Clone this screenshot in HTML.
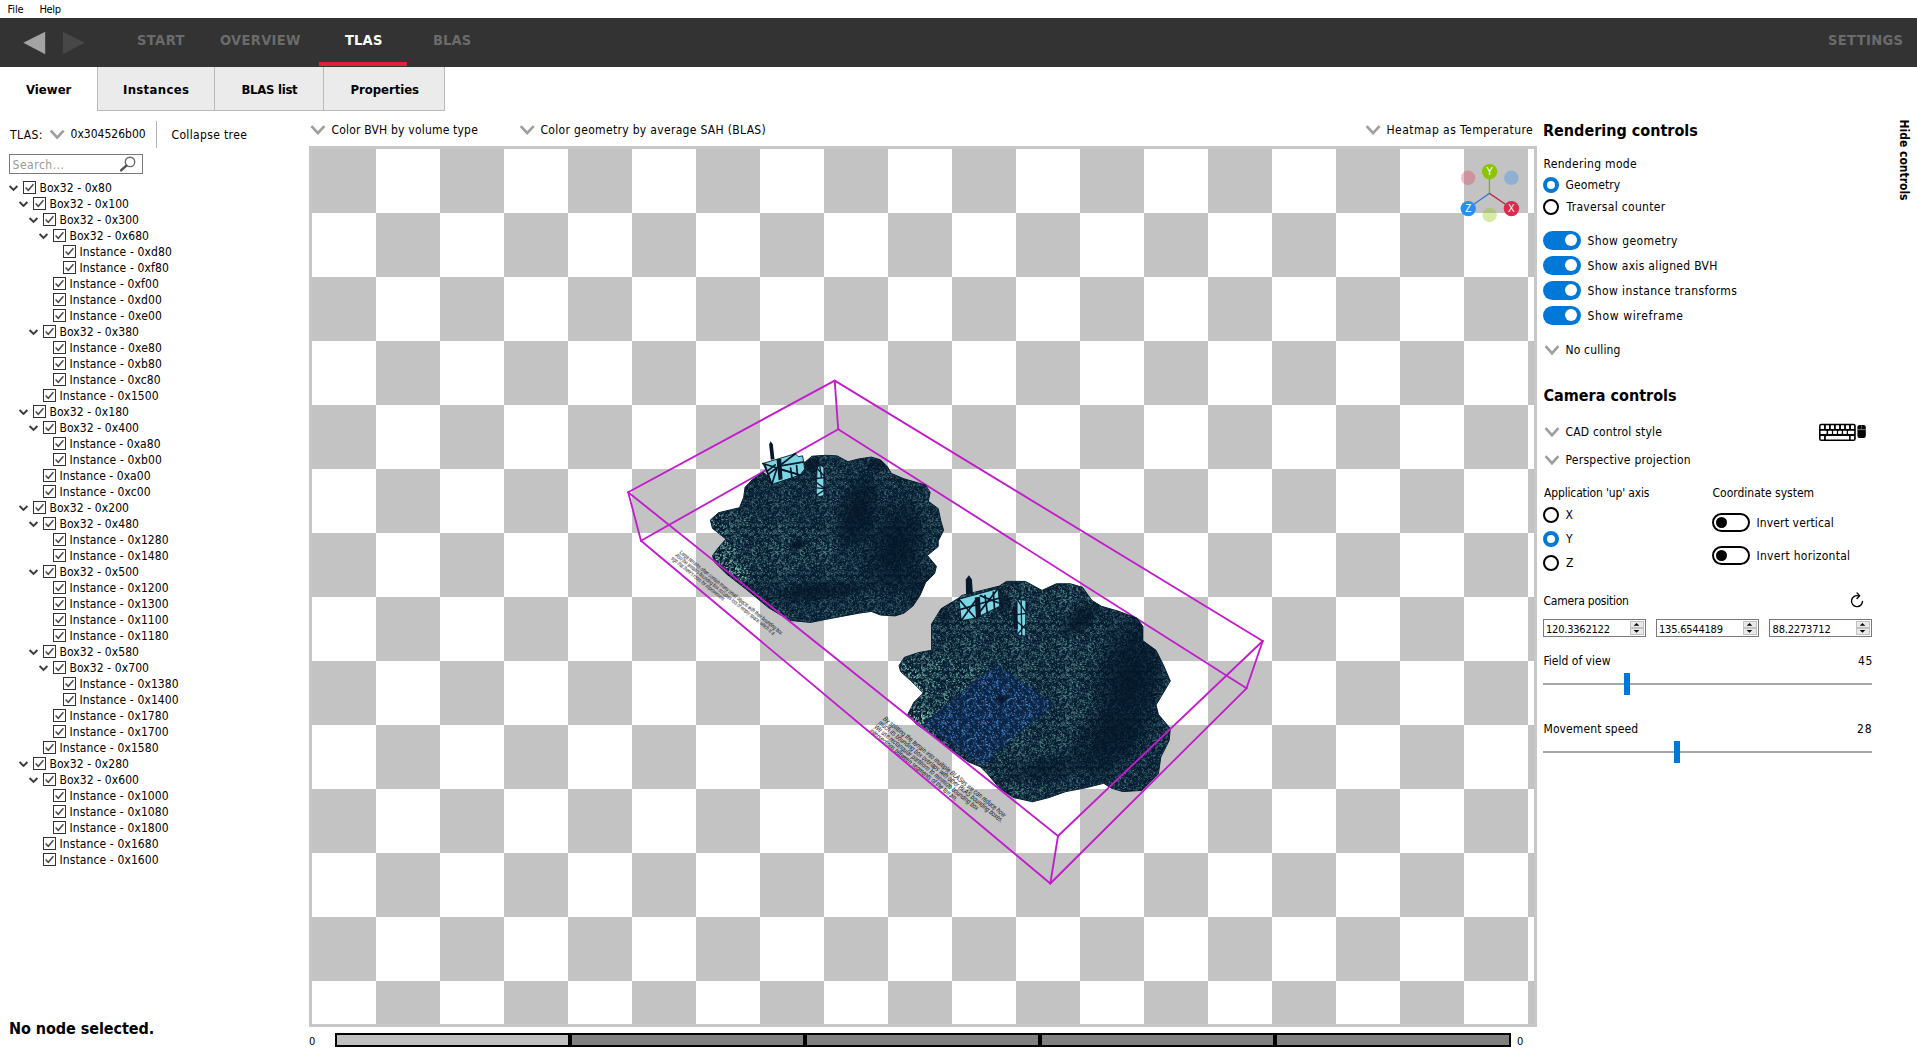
<!DOCTYPE html>
<html lang="en"><head><meta charset="utf-8"><title>Radeon Raytracing Analyzer</title>
<style>
html,body{margin:0;padding:0;background:#fff;}
body{width:1917px;height:1053px;position:relative;overflow:hidden;font-family:"DejaVu Sans Condensed","DejaVu Sans","Liberation Sans",sans-serif;font-stretch:condensed;font-size:12px;color:#000;}
.t{position:absolute;white-space:pre;line-height:20px;}
.b{position:absolute;box-sizing:border-box;}
svg{display:block;overflow:visible;}
</style></head><body>

<div class="t" id="t0" style="left:7.50px;top:0px;font-size:11px;letter-spacing:-0.133px;">File</div>
<div class="t" id="t1" style="left:39.50px;top:0px;font-size:11px;letter-spacing:-0.366px;">Help</div>
<div class="b" style="left:0px;top:18px;width:1917px;height:49px;background:#333333;"></div>
<svg class="b" style="left:0;top:18px" width="120" height="49"><polygon points="23.3,24.7 45.2,13.7 45.2,36.3" fill="#a3a3a3"/><polygon points="62.8,13.7 84.8,24.7 62.8,36.3" fill="#474747"/></svg>
<div class="t" id="t2" style="left:137.00px;top:30px;font-size:14.5px;font-weight:bold;color:#6b6b6b;letter-spacing:0.475px;">START</div>
<div class="t" id="t3" style="left:220.00px;top:30px;font-size:14.5px;font-weight:bold;color:#6b6b6b;letter-spacing:0.343px;">OVERVIEW</div>
<div class="t" id="t4" style="left:345.00px;top:30px;font-size:14.5px;font-weight:bold;color:#ffffff;letter-spacing:0.200px;">TLAS</div>
<div class="t" id="t5" style="left:433.00px;top:30px;font-size:14.5px;font-weight:bold;color:#6b6b6b;letter-spacing:0.167px;">BLAS</div>
<div class="t" id="t6" style="left:1828.00px;top:30px;font-size:14.5px;font-weight:bold;color:#6b6b6b;letter-spacing:0.371px;">SETTINGS</div>
<div class="b" style="left:319px;top:61.7px;width:88px;height:4.7px;background:#e0213c;"></div>
<div class="b" style="left:97px;top:67px;width:348px;height:44px;background:#ebebeb;border:1px solid #b9b9b9;border-top:none;"></div>
<div class="b" style="left:214px;top:67px;width:1px;height:43px;background:#b9b9b9;"></div>
<div class="b" style="left:323px;top:67px;width:1px;height:43px;background:#b9b9b9;"></div>
<div class="t" id="t7" style="left:26.00px;top:80px;font-size:13px;font-weight:bold;letter-spacing:0.020px;">Viewer</div>
<div class="t" id="t8" style="left:123.00px;top:80px;font-size:13px;font-weight:bold;letter-spacing:0.325px;">Instances</div>
<div class="t" id="t9" style="left:241.50px;top:80px;font-size:13px;font-weight:bold;letter-spacing:-0.288px;">BLAS list</div>
<div class="t" id="t10" style="left:350.50px;top:80px;font-size:13px;font-weight:bold;letter-spacing:-0.044px;">Properties</div>
<div class="t" id="t11" style="left:10.00px;top:125px;font-size:12px;letter-spacing:0.425px;">TLAS:</div>
<svg class="b" style="left:0;top:0" width="1" height="1"><path d="M50.75,130.55 L57.20,137.55 L63.65,130.55" fill="none" stroke="#9e9e9e" stroke-width="2.7" stroke-linejoin="miter"/></svg>
<div class="t" id="t12" style="left:70.50px;top:124px;font-size:12px;letter-spacing:0.010px;">0x304526b00</div>
<div class="b" style="left:156px;top:121px;width:1px;height:27px;background:#b4b4b4;"></div>
<div class="t" id="t13" style="left:171.50px;top:125px;font-size:12px;letter-spacing:0.358px;">Collapse tree</div>
<div class="b" style="left:9px;top:154px;width:134px;height:20px;background:#fff;border:1px solid #7a7a7a;"></div>
<div class="t" id="t14" style="left:12.50px;top:155px;font-size:12px;color:#999999;letter-spacing:0.524px;">Search...</div>
<svg class="b" style="left:119px;top:156px" width="18" height="16" viewBox="0 0 18 16"><circle cx="11" cy="5.9" r="4.7" fill="none" stroke="#666" stroke-width="1.4"/><path d="M7.4,9.6 L2.2,14.3" stroke="#555" stroke-width="2.5" stroke-linecap="round"/></svg>
<svg width="0" height="0" style="position:absolute"><defs><g id="cb"><rect x="0.5" y="0.5" width="12" height="12" fill="#fff" stroke="#333" stroke-width="1"/><path d="M2.6,6.4 L5.3,9.3 L10.4,3.2" fill="none" stroke="#4a4a4a" stroke-width="1.5"/></g><g id="ar"><path d="M0.6,0.8 L4.5,4.7 L8.4,0.8" fill="none" stroke="#3a3a3a" stroke-width="1.9"/></g></defs></svg>
<svg class="b" style="left:0;top:176px" width="300" height="700">
<use href="#cb" x="23" y="5"/>
<use href="#ar" x="9" y="9.2"/>
<use href="#cb" x="33" y="21"/>
<use href="#ar" x="19" y="25.2"/>
<use href="#cb" x="43" y="37"/>
<use href="#ar" x="29" y="41.2"/>
<use href="#cb" x="53" y="53"/>
<use href="#ar" x="39" y="57.2"/>
<use href="#cb" x="63" y="69"/>
<use href="#cb" x="63" y="85"/>
<use href="#cb" x="53" y="101"/>
<use href="#cb" x="53" y="117"/>
<use href="#cb" x="53" y="133"/>
<use href="#cb" x="43" y="149"/>
<use href="#ar" x="29" y="153.2"/>
<use href="#cb" x="53" y="165"/>
<use href="#cb" x="53" y="181"/>
<use href="#cb" x="53" y="197"/>
<use href="#cb" x="43" y="213"/>
<use href="#cb" x="33" y="229"/>
<use href="#ar" x="19" y="233.2"/>
<use href="#cb" x="43" y="245"/>
<use href="#ar" x="29" y="249.2"/>
<use href="#cb" x="53" y="261"/>
<use href="#cb" x="53" y="277"/>
<use href="#cb" x="43" y="293"/>
<use href="#cb" x="43" y="309"/>
<use href="#cb" x="33" y="325"/>
<use href="#ar" x="19" y="329.2"/>
<use href="#cb" x="43" y="341"/>
<use href="#ar" x="29" y="345.2"/>
<use href="#cb" x="53" y="357"/>
<use href="#cb" x="53" y="373"/>
<use href="#cb" x="43" y="389"/>
<use href="#ar" x="29" y="393.2"/>
<use href="#cb" x="53" y="405"/>
<use href="#cb" x="53" y="421"/>
<use href="#cb" x="53" y="437"/>
<use href="#cb" x="53" y="453"/>
<use href="#cb" x="43" y="469"/>
<use href="#ar" x="29" y="473.2"/>
<use href="#cb" x="53" y="485"/>
<use href="#ar" x="39" y="489.2"/>
<use href="#cb" x="63" y="501"/>
<use href="#cb" x="63" y="517"/>
<use href="#cb" x="53" y="533"/>
<use href="#cb" x="53" y="549"/>
<use href="#cb" x="43" y="565"/>
<use href="#cb" x="33" y="581"/>
<use href="#ar" x="19" y="585.2"/>
<use href="#cb" x="43" y="597"/>
<use href="#ar" x="29" y="601.2"/>
<use href="#cb" x="53" y="613"/>
<use href="#cb" x="53" y="629"/>
<use href="#cb" x="53" y="645"/>
<use href="#cb" x="43" y="661"/>
<use href="#cb" x="43" y="677"/>
</svg>
<div class="t" id="t15" style="left:39.50px;top:178px;font-size:12px;letter-spacing:0.081px;">Box32 - 0x80</div>
<div class="t" id="t16" style="left:49.50px;top:194px;font-size:12px;letter-spacing:0.092px;">Box32 - 0x100</div>
<div class="t" id="t17" style="left:59.50px;top:210px;font-size:12px;letter-spacing:0.092px;">Box32 - 0x300</div>
<div class="t" id="t18" style="left:69.50px;top:226px;font-size:12px;letter-spacing:0.092px;">Box32 - 0x680</div>
<div class="t" id="t19" style="left:79.50px;top:242px;font-size:12px;letter-spacing:0.120px;">Instance - 0xd80</div>
<div class="t" id="t20" style="left:79.50px;top:258px;font-size:12px;letter-spacing:0.120px;">Instance - 0xf80</div>
<div class="t" id="t21" style="left:69.50px;top:274px;font-size:12px;letter-spacing:0.120px;">Instance - 0xf00</div>
<div class="t" id="t22" style="left:69.50px;top:290px;font-size:12px;letter-spacing:0.120px;">Instance - 0xd00</div>
<div class="t" id="t23" style="left:69.50px;top:306px;font-size:12px;letter-spacing:0.167px;">Instance - 0xe00</div>
<div class="t" id="t24" style="left:59.50px;top:322px;font-size:12px;letter-spacing:0.092px;">Box32 - 0x380</div>
<div class="t" id="t25" style="left:69.50px;top:338px;font-size:12px;letter-spacing:0.167px;">Instance - 0xe80</div>
<div class="t" id="t26" style="left:69.50px;top:354px;font-size:12px;letter-spacing:0.120px;">Instance - 0xb80</div>
<div class="t" id="t27" style="left:69.50px;top:370px;font-size:12px;letter-spacing:0.120px;">Instance - 0xc80</div>
<div class="t" id="t28" style="left:59.50px;top:386px;font-size:12px;letter-spacing:0.112px;">Instance - 0x1500</div>
<div class="t" id="t29" style="left:49.50px;top:402px;font-size:12px;letter-spacing:0.092px;">Box32 - 0x180</div>
<div class="t" id="t30" style="left:59.50px;top:418px;font-size:12px;letter-spacing:0.092px;">Box32 - 0x400</div>
<div class="t" id="t31" style="left:69.50px;top:434px;font-size:12px;letter-spacing:0.053px;">Instance - 0xa80</div>
<div class="t" id="t32" style="left:69.50px;top:450px;font-size:12px;letter-spacing:0.120px;">Instance - 0xb00</div>
<div class="t" id="t33" style="left:59.50px;top:466px;font-size:12px;letter-spacing:0.053px;">Instance - 0xa00</div>
<div class="t" id="t34" style="left:59.50px;top:482px;font-size:12px;letter-spacing:0.120px;">Instance - 0xc00</div>
<div class="t" id="t35" style="left:49.50px;top:498px;font-size:12px;letter-spacing:0.092px;">Box32 - 0x200</div>
<div class="t" id="t36" style="left:59.50px;top:514px;font-size:12px;letter-spacing:0.092px;">Box32 - 0x480</div>
<div class="t" id="t37" style="left:69.50px;top:530px;font-size:12px;letter-spacing:0.112px;">Instance - 0x1280</div>
<div class="t" id="t38" style="left:69.50px;top:546px;font-size:12px;letter-spacing:0.112px;">Instance - 0x1480</div>
<div class="t" id="t39" style="left:59.50px;top:562px;font-size:12px;letter-spacing:0.092px;">Box32 - 0x500</div>
<div class="t" id="t40" style="left:69.50px;top:578px;font-size:12px;letter-spacing:0.112px;">Instance - 0x1200</div>
<div class="t" id="t41" style="left:69.50px;top:594px;font-size:12px;letter-spacing:0.112px;">Instance - 0x1300</div>
<div class="t" id="t42" style="left:69.50px;top:610px;font-size:12px;letter-spacing:0.112px;">Instance - 0x1100</div>
<div class="t" id="t43" style="left:69.50px;top:626px;font-size:12px;letter-spacing:0.112px;">Instance - 0x1180</div>
<div class="t" id="t44" style="left:59.50px;top:642px;font-size:12px;letter-spacing:0.092px;">Box32 - 0x580</div>
<div class="t" id="t45" style="left:69.50px;top:658px;font-size:12px;letter-spacing:0.092px;">Box32 - 0x700</div>
<div class="t" id="t46" style="left:79.50px;top:674px;font-size:12px;letter-spacing:0.112px;">Instance - 0x1380</div>
<div class="t" id="t47" style="left:79.50px;top:690px;font-size:12px;letter-spacing:0.112px;">Instance - 0x1400</div>
<div class="t" id="t48" style="left:69.50px;top:706px;font-size:12px;letter-spacing:0.112px;">Instance - 0x1780</div>
<div class="t" id="t49" style="left:69.50px;top:722px;font-size:12px;letter-spacing:0.112px;">Instance - 0x1700</div>
<div class="t" id="t50" style="left:59.50px;top:738px;font-size:12px;letter-spacing:0.112px;">Instance - 0x1580</div>
<div class="t" id="t51" style="left:49.50px;top:754px;font-size:12px;letter-spacing:0.092px;">Box32 - 0x280</div>
<div class="t" id="t52" style="left:59.50px;top:770px;font-size:12px;letter-spacing:0.092px;">Box32 - 0x600</div>
<div class="t" id="t53" style="left:69.50px;top:786px;font-size:12px;letter-spacing:0.112px;">Instance - 0x1000</div>
<div class="t" id="t54" style="left:69.50px;top:802px;font-size:12px;letter-spacing:0.112px;">Instance - 0x1080</div>
<div class="t" id="t55" style="left:69.50px;top:818px;font-size:12px;letter-spacing:0.112px;">Instance - 0x1800</div>
<div class="t" id="t56" style="left:59.50px;top:834px;font-size:12px;letter-spacing:0.112px;">Instance - 0x1680</div>
<div class="t" id="t57" style="left:59.50px;top:850px;font-size:12px;letter-spacing:0.112px;">Instance - 0x1600</div>
<div class="t" id="t58" style="left:9.00px;top:1019px;font-size:16px;font-weight:bold;letter-spacing:-0.057px;">No node selected.</div>
<svg class="b" style="left:0;top:0" width="1" height="1"><path d="M311.45,126.05 L317.90,133.05 L324.35,126.05" fill="none" stroke="#9e9e9e" stroke-width="2.7" stroke-linejoin="miter"/></svg>
<div class="t" id="t59" style="left:331.50px;top:120px;font-size:12px;letter-spacing:0.196px;">Color BVH by volume type</div>
<svg class="b" style="left:0;top:0" width="1" height="1"><path d="M520.75,126.05 L527.20,133.05 L533.65,126.05" fill="none" stroke="#9e9e9e" stroke-width="2.7" stroke-linejoin="miter"/></svg>
<div class="t" id="t60" style="left:540.50px;top:120px;font-size:12px;letter-spacing:0.320px;">Color geometry by average SAH (BLAS)</div>
<svg class="b" style="left:0;top:0" width="1" height="1"><path d="M1366.65,126.05 L1373.10,133.05 L1379.55,126.05" fill="none" stroke="#9e9e9e" stroke-width="2.7" stroke-linejoin="miter"/></svg>
<div class="t" id="t61" style="left:1386.50px;top:120px;font-size:12px;letter-spacing:0.448px;">Heatmap as Temperature</div>
<div class="b" style="left:309px;top:146px;width:1228px;height:881px;border:3px solid #c7c7c7;background-color:#fff;background-image:conic-gradient(#c3c3c3 25%,#fff 0 50%,#c3c3c3 0 75%,#fff 0);background-size:128px 128px;background-position:-64px 0;overflow:hidden;">
<svg class="b" style="left:0;top:0" width="1222" height="875" viewBox="312 149 1222 875"><defs><pattern id="mesh" width="48" height="48" patternUnits="userSpaceOnUse"><rect width="48" height="48" fill="#051c31"/><path d="M11.2,25.6h0.8v0.7h-0.8zM0.7,36.5h0.8v0.6h-0.8zM36.7,38.7l1.0,0.4l-0.5,0.8zM40.2,19.8h1.0v0.8h-1.0zM19.5,27.3h0.7v0.6h-0.7zM5.7,24.9h0.8v0.6h-0.8zM13.1,37.9h0.9v0.7h-0.9zM7.3,0.2l1.3,0.5l-0.6,1.0zM4.7,26.0h0.9v0.7h-0.9zM19.4,35.1l1.0,0.4l-0.5,0.8zM13.9,33.2h0.8v0.7h-0.8zM6.7,46.6h0.9v0.7h-0.9zM23.2,16.6l1.2,0.5l-0.6,1.0zM42.8,5.3h0.9v0.8h-0.9zM34.9,38.3l1.3,0.5l-0.6,1.0zM32.6,6.3l1.3,0.5l-0.6,1.0zM2.7,20.5h0.7v0.6h-0.7zM2.3,7.2l1.2,0.5l-0.6,0.9zM21.9,10.5h1.0v0.8h-1.0zM20.9,5.2h1.0v0.8h-1.0zM13.0,42.5h1.0v0.8h-1.0zM31.3,43.6h1.0v0.8h-1.0zM43.8,28.8h0.7v0.6h-0.7zM0.7,40.9l1.3,0.5l-0.6,1.0zM17.6,15.0l1.1,0.4l-0.5,0.8zM24.8,9.5h0.8v0.6h-0.8zM25.0,29.1l1.1,0.4l-0.5,0.8zM18.5,9.2h0.8v0.7h-0.8zM7.0,25.6l1.2,0.5l-0.6,0.9zM19.5,4.5h0.8v0.6h-0.8zM4.7,43.6h0.9v0.7h-0.9zM1.5,19.4l1.3,0.5l-0.6,1.0zM5.7,8.1h0.8v0.6h-0.8zM34.0,15.3h0.9v0.7h-0.9zM18.9,1.0h0.9v0.7h-0.9zM5.2,26.8h1.0v0.8h-1.0zM5.4,25.6h1.0v0.8h-1.0zM23.6,11.1l1.1,0.4l-0.5,0.8zM39.1,5.1h1.0v0.8h-1.0zM14.8,11.6h0.8v0.6h-0.8zM45.9,17.5l1.2,0.5l-0.6,0.9zM37.1,14.3l1.2,0.5l-0.6,0.9zM14.5,30.1h0.9v0.7h-0.9zM9.0,38.6h1.0v0.8h-1.0zM14.9,30.2h0.8v0.6h-0.8zM42.4,15.6h0.8v0.6h-0.8zM11.0,46.0l1.0,0.4l-0.4,0.7zM30.0,24.2h0.7v0.6h-0.7zM11.8,25.0h0.8v0.6h-0.8zM17.7,17.3h0.9v0.8h-0.9zM5.2,41.2l1.3,0.5l-0.6,1.0zM41.1,20.2h0.9v0.7h-0.9zM39.3,40.4l1.0,0.4l-0.5,0.8zM14.3,35.2l1.1,0.4l-0.5,0.8zM28.1,5.7h0.9v0.7h-0.9zM15.1,40.7l1.1,0.4l-0.5,0.8zM35.3,25.6l1.1,0.4l-0.5,0.9zM46.1,17.6h1.0v0.8h-1.0zM10.0,41.7h1.0v0.8h-1.0zM35.2,45.6h0.9v0.7h-0.9zM40.6,38.4h0.9v0.7h-0.9zM13.3,8.2h0.9v0.7h-0.9zM8.9,33.9h1.0v0.8h-1.0zM35.8,35.5h0.9v0.7h-0.9zM42.1,14.8h0.9v0.7h-0.9zM10.3,1.3h0.8v0.6h-0.8zM13.7,6.8l1.3,0.5l-0.6,1.0zM35.9,24.8l0.9,0.4l-0.4,0.7zM46.8,14.3h0.7v0.6h-0.7zM31.7,46.5h0.9v0.7h-0.9zM20.1,18.6l1.1,0.4l-0.5,0.9zM34.9,39.4h0.8v0.6h-0.8zM31.3,42.9h0.8v0.6h-0.8zM43.1,11.7h0.7v0.6h-0.7zM10.6,33.9h0.8v0.6h-0.8zM7.0,36.8h1.0v0.8h-1.0zM15.0,12.0l0.9,0.4l-0.4,0.7zM41.0,45.5l1.3,0.5l-0.6,1.0zM14.4,34.9h0.8v0.6h-0.8zM9.4,17.0l1.0,0.4l-0.4,0.7zM32.0,25.6h0.7v0.6h-0.7zM7.1,16.7h0.7v0.6h-0.7zM7.6,0.5h0.7v0.6h-0.7zM8.8,36.9l0.9,0.4l-0.4,0.7zM14.6,13.2h0.9v0.7h-0.9zM17.4,7.1h0.9v0.8h-0.9z" fill="#2f5466"/><path d="M27.3,28.5h1.0v0.8h-1.0zM46.4,12.6l1.0,0.4l-0.4,0.7zM45.1,42.1l1.1,0.4l-0.5,0.8zM44.9,1.0h0.8v0.7h-0.8zM36.4,2.2l0.9,0.4l-0.4,0.7zM3.6,46.9l1.2,0.5l-0.6,0.9zM12.6,10.2l0.9,0.4l-0.4,0.7zM9.4,26.8l1.0,0.4l-0.5,0.8zM12.4,42.9h0.7v0.6h-0.7zM3.7,30.3h1.0v0.8h-1.0zM21.1,38.0l0.9,0.4l-0.4,0.7zM35.5,11.0h0.8v0.6h-0.8zM36.8,10.0h1.0v0.8h-1.0zM13.3,30.9l1.0,0.4l-0.5,0.8zM40.5,20.5h1.0v0.8h-1.0zM44.3,37.1h1.0v0.8h-1.0zM8.9,24.0h0.8v0.7h-0.8zM35.4,43.0h0.9v0.8h-0.9zM4.4,14.6h0.8v0.6h-0.8zM22.8,2.8h1.0v0.8h-1.0zM31.4,17.5h0.9v0.7h-0.9zM45.8,32.5h0.9v0.7h-0.9zM13.6,26.3l1.0,0.4l-0.5,0.8zM6.8,42.6l1.0,0.4l-0.5,0.8zM34.8,25.0h1.0v0.8h-1.0zM15.3,27.8h0.8v0.6h-0.8zM42.7,32.2h0.7v0.6h-0.7zM27.0,4.0l1.0,0.4l-0.5,0.8zM43.2,18.6l1.1,0.4l-0.5,0.8zM16.0,5.2h0.8v0.6h-0.8zM15.2,7.6h1.0v0.8h-1.0zM15.4,35.8h0.8v0.6h-0.8zM32.8,29.6h0.9v0.7h-0.9zM20.0,14.5h0.7v0.6h-0.7zM47.0,5.7l1.1,0.4l-0.5,0.9zM41.9,26.1l0.9,0.4l-0.4,0.7zM34.5,20.7h0.7v0.6h-0.7zM29.9,36.8h0.8v0.6h-0.8zM22.8,9.2l1.2,0.4l-0.5,0.9zM35.7,24.9l1.3,0.5l-0.6,1.0zM11.3,31.8h0.9v0.7h-0.9zM38.5,0.6l1.2,0.4l-0.5,0.9zM21.8,9.1l1.2,0.5l-0.6,0.9zM28.5,42.7h0.8v0.7h-0.8zM1.3,13.2l1.2,0.5l-0.6,0.9zM15.6,4.8h1.0v0.8h-1.0zM12.2,43.9h0.8v0.6h-0.8zM5.1,6.4h0.7v0.6h-0.7zM35.2,28.4l1.1,0.4l-0.5,0.9zM30.0,35.7h1.0v0.8h-1.0zM26.1,31.8h0.9v0.7h-0.9zM19.7,16.9h1.0v0.8h-1.0zM18.7,16.8l1.3,0.5l-0.6,1.0zM36.5,43.7h0.8v0.6h-0.8zM17.8,22.0h0.8v0.6h-0.8zM16.1,5.1h0.9v0.7h-0.9zM11.3,44.3l1.1,0.4l-0.5,0.8zM45.3,41.5h0.7v0.6h-0.7zM12.7,29.4h0.7v0.6h-0.7zM28.2,2.0h0.8v0.6h-0.8zM10.4,8.8h0.7v0.6h-0.7zM0.5,16.7h0.7v0.6h-0.7zM0.3,35.0l1.4,0.5l-0.6,1.0zM12.8,21.0l1.3,0.5l-0.6,1.0zM39.7,39.8h1.0v0.8h-1.0zM10.9,9.5h0.8v0.6h-0.8zM46.3,1.5h0.7v0.6h-0.7zM23.5,14.9h0.7v0.6h-0.7zM46.8,31.9l1.1,0.4l-0.5,0.8zM46.9,2.2l1.1,0.4l-0.5,0.8zM10.2,23.3l1.3,0.5l-0.6,1.0zM5.2,39.2l1.2,0.5l-0.6,0.9zM46.8,37.5l1.1,0.4l-0.5,0.8zM28.4,44.1l1.1,0.4l-0.5,0.8zM11.2,3.1l1.1,0.4l-0.5,0.8zM40.2,6.8h0.9v0.8h-0.9zM45.8,15.2l1.1,0.4l-0.5,0.8zM40.8,4.5h0.9v0.7h-0.9zM25.7,4.5l0.9,0.4l-0.4,0.7z" fill="#3a6272"/><path d="M11.0,46.8h0.9v0.7h-0.9zM30.0,7.1h0.9v0.7h-0.9zM11.5,1.7l1.3,0.5l-0.6,1.0zM9.0,15.5h0.7v0.6h-0.7zM32.6,21.7h0.8v0.6h-0.8zM32.5,44.1l1.2,0.5l-0.6,1.0zM7.0,4.5l1.3,0.5l-0.6,1.0zM24.2,43.9l1.3,0.5l-0.6,1.0zM44.4,15.9h0.9v0.7h-0.9zM19.4,23.9l1.2,0.4l-0.5,0.9zM5.3,13.5h0.8v0.6h-0.8zM23.7,42.6l1.1,0.4l-0.5,0.8zM41.1,46.4l1.2,0.5l-0.5,0.9zM20.3,44.2h0.9v0.7h-0.9zM37.9,14.0h0.8v0.6h-0.8zM13.1,12.0h0.8v0.6h-0.8zM30.5,6.1l1.0,0.4l-0.5,0.8zM21.8,25.3h0.9v0.7h-0.9zM24.7,36.0h0.7v0.6h-0.7zM45.9,12.7h0.7v0.6h-0.7zM2.4,24.3h1.0v0.8h-1.0zM8.3,35.3h0.8v0.7h-0.8zM19.7,23.3l1.1,0.4l-0.5,0.8zM24.8,40.0h0.9v0.7h-0.9zM9.5,4.4h1.0v0.8h-1.0zM30.1,9.9l1.3,0.5l-0.6,1.0zM3.9,31.7h0.9v0.7h-0.9zM8.5,4.6h0.8v0.6h-0.8zM29.4,24.2h0.7v0.6h-0.7zM15.7,34.7h0.7v0.6h-0.7zM16.2,10.2l1.0,0.4l-0.5,0.8zM15.4,5.3h0.8v0.6h-0.8zM17.4,40.1h0.8v0.6h-0.8zM2.5,17.8h0.7v0.6h-0.7zM9.9,33.6l0.9,0.4l-0.4,0.7zM15.1,44.9l1.3,0.5l-0.6,1.0zM38.8,11.8h1.0v0.8h-1.0zM9.5,12.3l1.0,0.4l-0.4,0.7zM26.6,13.6l1.2,0.5l-0.6,0.9zM17.1,38.7l1.1,0.4l-0.5,0.9zM42.5,31.1l1.1,0.4l-0.5,0.8zM39.9,44.8h1.0v0.8h-1.0zM14.6,29.1h0.7v0.6h-0.7zM28.5,7.5h0.9v0.7h-0.9zM3.9,27.5l1.1,0.4l-0.5,0.9zM18.3,45.2h0.9v0.7h-0.9zM0.9,32.5h0.8v0.6h-0.8zM14.8,46.4h0.9v0.7h-0.9zM27.1,12.0h1.0v0.8h-1.0zM20.9,13.8h0.9v0.7h-0.9zM14.7,3.0h1.0v0.8h-1.0zM43.9,32.0l1.2,0.4l-0.5,0.9zM40.8,41.2h0.9v0.7h-0.9zM14.2,13.0h0.8v0.6h-0.8zM35.9,24.8h1.0v0.8h-1.0zM18.8,20.1h1.0v0.8h-1.0zM25.0,42.0l1.1,0.4l-0.5,0.8zM3.5,28.1h0.9v0.7h-0.9zM7.9,38.2l1.3,0.5l-0.6,1.0zM13.1,1.6h1.0v0.8h-1.0zM32.0,21.0l1.3,0.5l-0.6,1.0zM30.1,26.7h0.8v0.6h-0.8zM43.3,9.6h0.8v0.7h-0.8zM6.4,41.3h1.0v0.8h-1.0zM24.3,43.9h0.8v0.7h-0.8zM37.9,0.3h0.8v0.6h-0.8zM17.8,0.1h0.8v0.6h-0.8zM10.9,29.4l1.2,0.5l-0.5,0.9zM23.8,10.7l1.0,0.4l-0.5,0.8zM0.6,24.2l1.0,0.4l-0.5,0.8zM1.9,40.7l1.0,0.4l-0.5,0.8zM16.7,24.7l0.9,0.4l-0.4,0.7z" fill="#45707e"/><path d="M41.3,33.6l1.3,0.5l-0.6,1.0zM6.4,10.2l1.3,0.5l-0.6,1.0zM46.5,4.2l1.3,0.5l-0.6,1.0zM33.7,22.3h0.8v0.6h-0.8zM35.4,18.5l1.1,0.4l-0.5,0.8zM31.7,24.3l1.1,0.4l-0.5,0.9zM31.7,0.3h0.8v0.7h-0.8zM25.6,5.6h0.8v0.6h-0.8zM8.5,26.0h0.9v0.7h-0.9zM14.3,21.8h1.0v0.8h-1.0zM22.5,16.5h0.9v0.7h-0.9zM43.6,8.2l1.2,0.5l-0.6,1.0zM26.0,43.4h0.8v0.7h-0.8zM22.8,31.4l1.2,0.5l-0.6,0.9zM17.3,9.0h0.9v0.7h-0.9zM38.0,11.6h0.7v0.6h-0.7zM43.3,8.5h0.8v0.7h-0.8zM26.1,1.7l1.1,0.4l-0.5,0.8zM25.1,18.0h0.7v0.6h-0.7zM46.8,34.3l1.0,0.4l-0.5,0.8zM23.2,5.5l1.2,0.5l-0.6,1.0zM17.0,14.1h0.9v0.7h-0.9zM32.1,5.7h1.0v0.8h-1.0zM41.4,10.6l1.1,0.4l-0.5,0.8zM34.7,9.6l0.9,0.4l-0.4,0.7zM44.1,5.6l1.3,0.5l-0.6,1.0zM40.0,39.2h0.7v0.6h-0.7zM11.7,32.8l1.2,0.4l-0.5,0.9zM7.9,4.7l1.2,0.4l-0.5,0.9zM23.9,17.5h1.0v0.8h-1.0zM10.2,44.9l0.9,0.4l-0.4,0.7zM31.3,11.5h0.7v0.6h-0.7zM37.7,14.5l1.2,0.4l-0.5,0.9zM3.2,31.8l1.3,0.5l-0.6,1.0zM31.2,46.9h0.7v0.6h-0.7zM20.3,19.8h0.9v0.7h-0.9zM22.5,17.8l1.1,0.4l-0.5,0.9zM20.4,6.8h0.8v0.6h-0.8zM10.1,25.5h0.9v0.7h-0.9zM21.4,11.8h0.9v0.7h-0.9zM31.2,5.0l1.3,0.5l-0.6,1.0zM35.0,37.4l1.4,0.5l-0.6,1.0zM43.6,34.3l1.2,0.5l-0.5,0.9zM32.5,38.2l1.3,0.5l-0.6,1.0zM37.5,4.5l1.2,0.5l-0.6,1.0zM19.9,11.7h0.7v0.6h-0.7zM7.8,38.9l1.3,0.5l-0.6,1.0zM35.7,13.1l1.0,0.4l-0.5,0.8zM42.9,8.1h1.0v0.8h-1.0zM26.3,20.3h0.7v0.6h-0.7zM38.3,16.7l1.3,0.5l-0.6,1.0zM38.5,9.7l1.3,0.5l-0.6,1.0zM5.9,37.6h1.0v0.8h-1.0zM40.1,38.6h1.0v0.8h-1.0zM34.9,24.1h0.8v0.6h-0.8zM14.8,5.0l1.3,0.5l-0.6,1.0zM41.8,34.0h0.7v0.6h-0.7zM43.4,42.2h0.7v0.6h-0.7zM35.5,3.6l1.3,0.5l-0.6,1.0zM32.9,2.7l1.0,0.4l-0.5,0.8zM28.6,3.5l0.9,0.4l-0.4,0.7zM23.0,20.0l1.2,0.5l-0.6,0.9zM33.4,35.9h1.0v0.8h-1.0zM34.4,43.6h1.0v0.8h-1.0zM27.5,25.9l1.1,0.4l-0.5,0.8zM42.6,28.0l1.3,0.5l-0.6,1.0zM40.6,17.3h0.8v0.7h-0.8zM9.3,21.4h0.9v0.7h-0.9zM26.6,31.2h0.8v0.7h-0.8zM22.1,40.5h1.0v0.8h-1.0zM45.0,7.6l1.1,0.4l-0.5,0.9zM40.2,25.3h0.7v0.6h-0.7zM7.0,43.8h1.0v0.8h-1.0zM19.0,2.3l1.0,0.4l-0.5,0.8zM24.1,21.9l1.3,0.5l-0.6,1.0zM22.4,17.3h0.9v0.7h-0.9zM8.3,1.5l1.0,0.4l-0.5,0.8zM43.0,13.6h0.8v0.6h-0.8zM29.6,16.9h0.9v0.7h-0.9zM39.6,38.9h1.0v0.8h-1.0zM38.2,40.2h0.9v0.7h-0.9zM7.9,25.0h0.7v0.6h-0.7zM46.3,33.9h0.8v0.6h-0.8zM8.5,22.6l1.3,0.5l-0.6,1.0zM32.6,19.1h0.9v0.7h-0.9zM19.2,4.7h1.0v0.8h-1.0zM31.5,46.1h1.0v0.8h-1.0zM27.6,12.3l1.3,0.5l-0.6,1.0zM8.9,25.9h1.0v0.8h-1.0zM30.6,32.8l1.2,0.5l-0.6,0.9zM40.7,15.0l1.1,0.4l-0.5,0.8z" fill="#1f3e54"/><path d="M27.1,45.3h0.7v0.6h-0.7zM46.6,31.5l1.0,0.4l-0.5,0.8zM28.9,2.1h1.0v0.8h-1.0zM13.7,12.4h0.9v0.8h-0.9zM20.6,12.1h0.8v0.6h-0.8zM6.3,29.8l1.1,0.4l-0.5,0.8zM28.3,8.3l1.0,0.4l-0.5,0.8zM19.4,44.1h0.9v0.7h-0.9zM40.2,4.0h0.9v0.7h-0.9zM20.3,17.5h0.9v0.7h-0.9zM41.7,42.7l1.0,0.4l-0.4,0.7zM30.4,34.3l1.0,0.4l-0.5,0.8zM12.7,32.7l1.1,0.4l-0.5,0.9zM20.9,19.1h1.0v0.8h-1.0zM23.4,0.9l1.1,0.4l-0.5,0.8zM21.4,1.8h0.8v0.6h-0.8zM12.5,38.3h0.9v0.7h-0.9zM41.0,21.1l1.3,0.5l-0.6,1.0zM10.1,16.5h1.0v0.8h-1.0zM35.8,32.9l1.4,0.5l-0.6,1.0zM45.0,13.6l0.9,0.4l-0.4,0.7zM0.1,46.2l1.3,0.5l-0.6,1.0zM46.6,25.7h0.8v0.7h-0.8zM12.7,44.6l1.3,0.5l-0.6,1.0zM44.7,22.8h0.9v0.8h-0.9zM34.0,16.2h0.9v0.8h-0.9zM28.1,4.0h0.7v0.6h-0.7zM42.9,29.7l1.0,0.4l-0.4,0.7zM7.9,22.7l1.0,0.4l-0.5,0.8zM19.7,40.6h0.8v0.6h-0.8zM43.3,17.6l0.9,0.4l-0.4,0.7zM27.5,31.9l1.0,0.4l-0.5,0.8zM26.3,35.9h0.8v0.7h-0.8zM6.4,3.9l1.4,0.5l-0.6,1.0zM32.1,19.5h0.7v0.6h-0.7zM37.9,20.9l1.2,0.5l-0.6,0.9zM15.6,36.8l1.1,0.4l-0.5,0.9zM45.0,22.4h0.8v0.6h-0.8zM1.9,34.4l1.3,0.5l-0.6,1.0zM8.2,34.6h1.0v0.8h-1.0zM9.5,4.9h0.7v0.6h-0.7zM0.7,35.5h0.9v0.7h-0.9zM13.2,11.0h0.8v0.6h-0.8zM18.3,24.5h0.9v0.8h-0.9zM16.2,35.3h0.8v0.6h-0.8zM24.0,38.6h1.0v0.8h-1.0zM23.3,40.4h0.9v0.7h-0.9zM2.9,35.3h0.8v0.6h-0.8zM13.4,11.7h1.0v0.8h-1.0zM12.5,17.3l1.1,0.4l-0.5,0.9zM34.8,43.6l1.2,0.5l-0.6,0.9zM10.9,44.7h0.8v0.7h-0.8zM7.2,16.2l0.9,0.4l-0.4,0.7zM10.0,33.9l1.1,0.4l-0.5,0.9zM13.1,30.0l1.0,0.4l-0.5,0.8zM39.8,8.6h0.8v0.6h-0.8zM40.2,39.4l1.2,0.4l-0.5,0.9zM16.6,30.7l1.3,0.5l-0.6,1.0zM44.3,0.4h0.8v0.6h-0.8zM39.3,38.9h0.8v0.6h-0.8zM33.0,40.6l1.0,0.4l-0.5,0.8zM11.6,13.2h0.8v0.6h-0.8zM7.6,23.8l1.0,0.4l-0.5,0.8zM45.4,36.0l1.0,0.4l-0.5,0.8zM16.1,45.1l1.3,0.5l-0.6,1.0zM2.5,20.2h1.0v0.8h-1.0zM9.8,25.7l1.2,0.5l-0.5,0.9zM24.9,27.6h1.0v0.8h-1.0zM7.3,16.7l1.2,0.4l-0.5,0.9zM23.1,19.6h0.9v0.7h-0.9zM5.1,13.4h1.0v0.8h-1.0zM20.6,12.9l1.0,0.4l-0.5,0.8zM21.4,44.8l1.3,0.5l-0.6,1.0zM16.0,23.1h0.9v0.7h-0.9zM13.6,13.5h0.9v0.7h-0.9zM46.4,10.2h0.9v0.7h-0.9zM37.9,16.9h1.0v0.8h-1.0zM26.7,23.2l0.9,0.4l-0.4,0.7zM7.6,30.2h1.0v0.8h-1.0zM26.9,9.9h1.0v0.8h-1.0zM20.9,5.3l1.1,0.4l-0.5,0.8zM43.3,37.4l0.9,0.4l-0.4,0.7zM1.1,5.6h0.9v0.8h-0.9zM30.0,5.2h1.0v0.8h-1.0zM11.4,1.6h0.7v0.6h-0.7zM2.9,24.4h0.8v0.6h-0.8zM24.6,38.0l1.3,0.5l-0.6,1.0zM15.1,44.9h0.9v0.7h-0.9zM26.8,27.8h1.0v0.8h-1.0zM18.8,35.6h0.8v0.7h-0.8zM41.6,34.2h1.0v0.8h-1.0zM11.3,35.3h0.9v0.7h-0.9zM29.3,39.8h1.0v0.8h-1.0zM20.0,40.8h0.7v0.6h-0.7zM9.0,39.7l1.2,0.5l-0.6,0.9zM45.6,15.6h1.0v0.8h-1.0zM5.8,8.1h0.7v0.6h-0.7z" fill="#5a8a90"/><path d="M27.5,27.5l1.3,0.5l-0.6,1.0zM43.3,13.1h0.8v0.6h-0.8zM16.6,33.2h1.0v0.8h-1.0zM12.4,37.0l1.0,0.4l-0.4,0.7zM29.8,13.6l1.2,0.4l-0.5,0.9zM42.1,42.3h0.9v0.7h-0.9zM5.7,23.6h0.8v0.6h-0.8zM45.7,25.4h1.0v0.8h-1.0zM12.9,41.8h0.7v0.6h-0.7zM24.8,19.9l1.1,0.4l-0.5,0.9zM34.0,37.4h0.9v0.7h-0.9zM28.4,36.8l1.1,0.4l-0.5,0.8zM27.3,42.4h0.9v0.7h-0.9zM33.9,40.3h0.8v0.7h-0.8zM12.5,18.0h1.0v0.8h-1.0zM9.5,11.8l1.3,0.5l-0.6,1.0zM31.4,1.4h0.8v0.6h-0.8zM8.0,19.0h0.8v0.6h-0.8zM28.6,20.8h0.8v0.6h-0.8zM1.4,4.3h0.8v0.6h-0.8zM31.8,4.6l1.0,0.4l-0.5,0.8zM36.4,19.1h1.0v0.8h-1.0zM5.4,29.7l1.0,0.4l-0.4,0.7zM9.8,20.5h0.8v0.6h-0.8zM41.2,35.1h0.8v0.6h-0.8zM10.5,13.4l1.1,0.4l-0.5,0.8zM39.3,35.2h0.8v0.6h-0.8zM12.8,42.3h0.8v0.6h-0.8zM31.2,20.8h0.8v0.6h-0.8zM34.8,36.2h0.7v0.6h-0.7zM0.2,33.3h1.0v0.8h-1.0zM21.7,22.2l1.2,0.5l-0.6,0.9zM15.5,26.5h0.9v0.7h-0.9zM25.4,39.4l1.3,0.5l-0.6,1.0zM0.1,20.7l1.1,0.4l-0.5,0.9zM7.0,20.1h0.9v0.8h-0.9zM43.2,19.7h0.8v0.7h-0.8zM4.0,18.6l1.1,0.4l-0.5,0.9zM33.6,9.9l1.1,0.4l-0.5,0.9zM28.8,17.6h1.0v0.8h-1.0zM15.5,0.1l1.1,0.4l-0.5,0.8zM3.3,29.6h0.7v0.6h-0.7zM11.3,9.6h0.8v0.7h-0.8zM12.2,46.8l1.2,0.5l-0.6,1.0zM6.3,18.1l1.3,0.5l-0.6,1.0zM43.7,29.7h0.9v0.7h-0.9zM40.9,44.2l1.2,0.4l-0.5,0.9zM9.4,0.0l1.2,0.5l-0.6,1.0zM38.9,44.8l1.2,0.5l-0.5,0.9zM41.4,25.7h0.8v0.7h-0.8zM13.2,45.2l1.1,0.4l-0.5,0.9zM1.7,31.8h0.7v0.6h-0.7zM46.5,4.8h1.0v0.8h-1.0zM42.8,22.2h0.9v0.7h-0.9zM13.9,41.3l1.3,0.5l-0.6,1.0zM23.7,6.3l1.2,0.4l-0.5,0.9zM20.6,17.2h0.9v0.7h-0.9zM17.6,33.3h0.8v0.7h-0.8zM20.8,29.9h1.0v0.8h-1.0zM16.1,21.1h0.8v0.6h-0.8zM20.5,43.4h0.9v0.7h-0.9zM24.8,12.3h0.8v0.7h-0.8zM43.8,40.9h1.0v0.8h-1.0zM21.9,43.4l1.2,0.5l-0.6,0.9zM39.3,2.3h0.7v0.6h-0.7zM20.2,25.4l1.3,0.5l-0.6,1.0zM6.7,11.5l1.0,0.4l-0.5,0.8zM41.2,6.1h1.0v0.8h-1.0zM43.3,37.4h0.9v0.7h-0.9zM26.1,14.4h1.0v0.8h-1.0zM17.9,24.9h0.7v0.6h-0.7zM12.2,10.1h1.0v0.8h-1.0zM44.1,8.0h0.8v0.7h-0.8zM1.5,39.4h0.8v0.7h-0.8zM27.1,10.4h0.7v0.6h-0.7zM29.6,13.4h0.9v0.8h-0.9z" fill="#2a4c60"/><path d="M42.5,26.7l1.2,0.5l-0.6,0.9zM3.6,28.2l0.9,0.4l-0.4,0.7zM44.2,23.8l1.1,0.4l-0.5,0.9zM20.4,44.7h1.0v0.8h-1.0zM26.8,18.8h1.0v0.8h-1.0zM26.2,45.4l1.1,0.4l-0.5,0.8zM27.6,40.3h0.7v0.6h-0.7zM29.3,2.4h0.8v0.7h-0.8zM1.6,3.8l1.4,0.5l-0.6,1.0zM22.2,3.2l1.3,0.5l-0.6,1.0zM17.0,18.9h1.0v0.8h-1.0zM14.9,1.5h0.9v0.8h-0.9zM18.6,1.3h1.0v0.8h-1.0zM14.6,21.2h1.0v0.8h-1.0zM20.6,11.8l1.1,0.4l-0.5,0.8zM24.4,30.0h0.7v0.6h-0.7zM20.9,42.7h0.9v0.7h-0.9zM14.8,24.5l1.1,0.4l-0.5,0.8zM16.6,43.0h0.7v0.6h-0.7zM40.4,45.1h0.8v0.6h-0.8zM25.8,28.7l1.0,0.4l-0.5,0.8zM18.0,46.1h0.8v0.7h-0.8zM43.3,25.1h1.0v0.8h-1.0zM14.8,35.5h0.8v0.7h-0.8zM36.7,44.5l1.2,0.5l-0.6,0.9zM26.2,35.0h1.0v0.8h-1.0zM15.4,45.6h0.7v0.6h-0.7zM20.7,11.1h0.7v0.6h-0.7zM46.3,17.9h1.0v0.8h-1.0zM24.4,14.5h0.9v0.7h-0.9zM18.4,24.7l1.0,0.4l-0.4,0.7zM4.0,41.7l1.0,0.4l-0.5,0.8zM38.5,3.3h0.8v0.6h-0.8zM13.5,44.5h0.8v0.6h-0.8zM12.3,46.6h1.0v0.8h-1.0zM7.5,17.1l1.2,0.5l-0.6,1.0zM18.4,9.7l1.2,0.5l-0.6,0.9zM22.8,31.0l1.0,0.4l-0.4,0.7zM13.1,41.7l0.9,0.4l-0.4,0.7zM29.2,21.1l1.3,0.5l-0.6,1.0zM43.6,1.4h1.0v0.8h-1.0zM32.2,31.1h0.9v0.7h-0.9zM12.2,21.8h0.7v0.6h-0.7zM10.6,3.5h0.7v0.6h-0.7zM46.9,40.2l1.3,0.5l-0.6,1.0zM2.9,28.7h0.7v0.6h-0.7zM24.2,23.6h0.8v0.6h-0.8zM18.7,16.5h0.8v0.7h-0.8zM36.8,16.6h0.9v0.7h-0.9zM11.1,9.0h1.0v0.8h-1.0zM4.0,26.7h0.8v0.7h-0.8zM25.4,5.4h0.9v0.7h-0.9zM44.9,19.2h0.8v0.6h-0.8zM7.1,24.7l1.2,0.5l-0.6,0.9zM28.5,18.3l1.3,0.5l-0.6,1.0zM38.9,38.0l0.9,0.4l-0.4,0.7zM35.5,39.6h0.7v0.6h-0.7zM12.5,32.4l1.2,0.5l-0.6,0.9zM10.7,34.3l1.1,0.4l-0.5,0.9zM23.8,20.4l1.0,0.4l-0.4,0.7zM21.2,32.7h1.0v0.8h-1.0zM34.4,34.1h0.8v0.7h-0.8zM13.8,10.4l1.2,0.4l-0.5,0.9zM34.2,11.0h1.0v0.8h-1.0zM20.7,28.5l1.0,0.4l-0.4,0.7zM40.1,40.1l1.2,0.5l-0.6,0.9zM25.5,2.5h1.0v0.8h-1.0zM41.9,38.2h0.8v0.6h-0.8zM33.9,45.9l1.1,0.4l-0.5,0.9zM22.6,23.0l1.2,0.5l-0.6,0.9zM15.8,23.8l1.3,0.5l-0.6,1.0zM7.3,32.7h0.7v0.6h-0.7zM30.4,1.5h1.0v0.8h-1.0zM38.0,23.3l1.2,0.5l-0.6,0.9zM0.5,7.5h0.9v0.7h-0.9zM31.7,25.5h0.7v0.6h-0.7zM15.2,16.1l1.3,0.5l-0.6,1.0zM13.9,17.2l1.2,0.4l-0.5,0.9zM22.6,16.4l1.2,0.4l-0.5,0.9zM20.1,22.7h0.8v0.7h-0.8zM26.5,3.6l1.0,0.4l-0.5,0.8zM30.4,34.6h0.9v0.7h-0.9zM43.7,3.6h0.7v0.6h-0.7zM41.8,40.1l1.2,0.5l-0.5,0.9zM14.9,34.7h1.0v0.8h-1.0z" fill="#4a7684"/><path d="M0.9,20.1h0.8v0.7h-0.8zM18.2,40.7l1.2,0.5l-0.6,0.9zM8.8,20.5l1.2,0.5l-0.6,0.9zM31.4,34.5l1.2,0.4l-0.5,0.9zM16.0,40.1l0.9,0.4l-0.4,0.7zM39.3,44.8h0.9v0.7h-0.9zM36.1,24.0h1.0v0.8h-1.0zM10.8,11.0l1.2,0.5l-0.6,1.0zM2.1,8.6h0.7v0.6h-0.7zM21.5,14.7h0.8v0.6h-0.8zM5.3,12.7h0.7v0.6h-0.7zM18.3,9.0h0.8v0.7h-0.8zM8.1,35.3l1.3,0.5l-0.6,1.0zM0.1,9.2h1.0v0.8h-1.0zM22.0,29.3h0.7v0.6h-0.7zM3.6,16.3l1.1,0.4l-0.5,0.9zM32.3,17.1l1.3,0.5l-0.6,1.0zM17.4,29.7l1.0,0.4l-0.5,0.8zM3.7,10.8l1.0,0.4l-0.5,0.8zM17.4,6.7h0.9v0.7h-0.9zM24.8,20.8h0.9v0.7h-0.9zM6.5,14.4l1.2,0.4l-0.5,0.9zM4.6,46.0h0.9v0.8h-0.9zM8.3,14.2l1.1,0.4l-0.5,0.8zM10.8,12.3h0.8v0.6h-0.8zM37.2,34.5l1.3,0.5l-0.6,1.0zM2.1,45.3h0.8v0.6h-0.8zM9.1,41.9l1.3,0.5l-0.6,1.0zM6.5,36.5h1.0v0.8h-1.0zM44.6,14.9h0.8v0.7h-0.8zM37.4,36.6l1.0,0.4l-0.5,0.8zM20.6,36.1l1.1,0.4l-0.5,0.9zM33.6,8.7l1.4,0.5l-0.6,1.0zM25.8,3.8l1.3,0.5l-0.6,1.0zM9.5,1.7h1.0v0.8h-1.0zM0.3,1.8h0.8v0.6h-0.8zM12.4,11.6l1.3,0.5l-0.6,1.0zM26.2,20.0h0.7v0.6h-0.7zM16.1,39.7h0.8v0.7h-0.8zM26.8,28.7h0.9v0.7h-0.9zM27.5,13.6h1.0v0.8h-1.0zM0.2,45.1h0.8v0.7h-0.8zM39.3,32.1l1.2,0.5l-0.6,0.9zM20.4,23.5h0.7v0.6h-0.7zM14.3,21.8h0.8v0.6h-0.8zM9.3,42.9h0.8v0.7h-0.8zM14.6,15.1l1.3,0.5l-0.6,1.0zM15.1,9.8l1.1,0.4l-0.5,0.8zM20.3,5.1h0.9v0.7h-0.9zM37.0,23.9h0.9v0.7h-0.9zM0.9,20.7h0.9v0.7h-0.9zM12.4,23.6l1.4,0.5l-0.6,1.0zM24.7,3.4h0.9v0.7h-0.9zM1.0,38.3l1.0,0.4l-0.5,0.8zM36.8,42.2h1.0v0.8h-1.0zM32.4,21.7h1.0v0.8h-1.0zM5.1,31.1h0.8v0.6h-0.8zM33.9,36.5h0.7v0.6h-0.7zM38.1,44.4h1.0v0.8h-1.0zM6.1,9.8h0.7v0.6h-0.7zM35.2,8.1h0.8v0.7h-0.8zM27.9,32.4h0.7v0.6h-0.7zM33.7,44.3h0.9v0.7h-0.9zM20.4,38.3h0.8v0.6h-0.8zM46.3,33.3h0.8v0.6h-0.8zM4.5,13.5l1.1,0.4l-0.5,0.9zM38.2,39.2h1.0v0.8h-1.0z" fill="#35586a"/><path d="M32.1,6.2h0.9v0.7h-0.9zM34.9,10.2h0.9v0.7h-0.9zM6.1,13.7h1.0v0.8h-1.0zM21.5,35.4h1.0v0.8h-1.0zM41.8,40.5h1.0v0.8h-1.0zM3.4,18.1h0.8v0.7h-0.8zM44.0,17.6h1.0v0.8h-1.0zM40.1,11.4h0.8v0.6h-0.8zM29.2,31.7h0.7v0.6h-0.7zM17.3,21.2h0.9v0.7h-0.9zM30.3,30.5l1.1,0.4l-0.5,0.8zM27.4,29.8l1.4,0.5l-0.6,1.0zM5.8,2.4l1.2,0.5l-0.6,1.0zM28.5,44.5h0.7v0.6h-0.7zM40.4,4.8h1.0v0.8h-1.0zM17.8,5.5l0.9,0.4l-0.4,0.7zM20.3,16.2h1.0v0.8h-1.0zM5.5,5.9h1.0v0.8h-1.0zM1.2,4.9h0.7v0.6h-0.7zM24.1,20.3h0.9v0.7h-0.9zM40.4,23.0h0.9v0.7h-0.9zM24.2,18.7l0.9,0.4l-0.4,0.7zM32.3,20.1h1.0v0.8h-1.0zM9.7,32.8h0.9v0.7h-0.9zM15.9,9.2l1.2,0.4l-0.5,0.9zM31.7,14.3l1.1,0.4l-0.5,0.9zM1.4,14.4l1.2,0.5l-0.6,1.0zM35.1,9.7l1.0,0.4l-0.4,0.7zM24.5,31.5l1.0,0.4l-0.4,0.7zM23.1,39.1h0.8v0.6h-0.8zM31.1,17.0h1.0v0.8h-1.0zM5.1,4.1l0.9,0.4l-0.4,0.7zM0.9,21.2l1.1,0.4l-0.5,0.8zM17.0,13.5l1.3,0.5l-0.6,1.0zM16.8,43.5h0.8v0.7h-0.8zM42.7,2.3h0.7v0.6h-0.7zM39.4,31.6l1.1,0.4l-0.5,0.9zM32.3,42.9h0.9v0.7h-0.9zM21.2,25.5h1.0v0.8h-1.0zM8.7,19.0h0.8v0.7h-0.8zM33.0,7.3h0.7v0.6h-0.7zM1.0,18.3h0.7v0.6h-0.7zM8.3,20.6l1.1,0.4l-0.5,0.8zM45.4,8.1h1.0v0.8h-1.0zM15.9,30.3l1.1,0.4l-0.5,0.8zM41.8,25.0l1.1,0.4l-0.5,0.9zM27.3,43.2l1.2,0.5l-0.6,1.0zM37.6,32.7l1.1,0.4l-0.5,0.8zM4.2,23.6h0.7v0.6h-0.7zM19.4,7.9h0.9v0.7h-0.9zM7.6,30.1h0.7v0.6h-0.7zM14.0,14.1h0.9v0.7h-0.9zM16.2,23.5l0.9,0.4l-0.4,0.7zM19.3,1.2l1.3,0.5l-0.6,1.0zM17.4,21.3h0.8v0.7h-0.8zM16.6,26.4l1.3,0.5l-0.6,1.0zM46.4,16.7h0.8v0.6h-0.8zM23.5,30.2h1.0v0.8h-1.0zM42.7,30.5l1.4,0.5l-0.6,1.0zM39.8,39.2h1.0v0.8h-1.0zM0.0,3.7h0.8v0.6h-0.8zM19.8,22.7h0.9v0.7h-0.9zM12.3,5.5l1.0,0.4l-0.5,0.8zM36.6,11.1h0.8v0.6h-0.8zM17.5,40.4l1.2,0.5l-0.6,0.9zM12.9,7.4l0.9,0.4l-0.4,0.7zM4.1,30.9h0.9v0.7h-0.9zM35.1,19.6h0.7v0.6h-0.7zM30.8,41.0h1.0v0.8h-1.0zM20.0,3.4l1.2,0.5l-0.6,0.9z" fill="#254458"/><path d="M44.6,31.7h0.8v0.6h-0.8zM9.3,25.1h1.0v0.8h-1.0zM27.7,37.7l1.0,0.4l-0.5,0.8zM4.3,4.7l1.3,0.5l-0.6,1.0zM30.8,5.8l1.3,0.5l-0.6,1.0zM40.4,37.5h0.9v0.7h-0.9zM37.0,19.2h1.0v0.8h-1.0zM17.4,40.2h0.9v0.7h-0.9zM20.9,33.0h0.8v0.7h-0.8zM43.9,8.7h0.7v0.6h-0.7zM6.2,25.0l1.2,0.4l-0.5,0.9zM36.9,46.0h0.7v0.6h-0.7zM12.2,2.1l1.1,0.4l-0.5,0.9zM39.1,25.9h0.8v0.6h-0.8zM30.4,6.7h0.7v0.6h-0.7zM18.0,35.6h0.8v0.6h-0.8zM28.4,2.7h0.9v0.7h-0.9zM21.3,22.5l1.2,0.4l-0.5,0.9zM10.3,17.4l1.2,0.5l-0.5,0.9zM23.0,46.3h0.9v0.7h-0.9zM29.6,23.2l1.3,0.5l-0.6,1.0zM16.3,46.8h0.9v0.7h-0.9zM34.0,28.5h0.9v0.8h-0.9zM20.4,12.3h1.0v0.8h-1.0zM12.2,4.1h0.7v0.6h-0.7zM18.4,35.2l1.2,0.5l-0.6,1.0zM22.3,2.7l1.2,0.4l-0.5,0.9zM10.1,43.2l1.2,0.4l-0.5,0.9zM30.3,38.4l1.0,0.4l-0.5,0.8zM2.3,3.5h0.9v0.7h-0.9zM10.6,37.3h0.8v0.6h-0.8zM38.6,16.6h0.7v0.6h-0.7zM18.1,39.1h0.9v0.7h-0.9zM1.0,16.9h0.7v0.6h-0.7zM27.2,25.7h0.9v0.7h-0.9zM44.8,29.8h0.8v0.6h-0.8zM39.4,16.5h0.7v0.6h-0.7zM5.5,23.4h0.8v0.6h-0.8zM42.2,8.4l1.1,0.4l-0.5,0.9zM5.6,20.0l1.3,0.5l-0.6,1.0zM26.1,13.3l1.3,0.5l-0.6,1.0zM16.5,10.4l0.9,0.4l-0.4,0.7zM27.7,28.9l1.0,0.4l-0.4,0.7zM38.1,3.9h0.8v0.6h-0.8zM35.1,31.2h0.8v0.7h-0.8zM6.6,14.9h0.7v0.6h-0.7zM23.9,2.8h1.0v0.8h-1.0zM11.3,35.3h0.9v0.8h-0.9zM20.1,38.7h1.0v0.8h-1.0zM15.3,42.5l1.1,0.4l-0.5,0.8zM34.2,18.7l1.3,0.5l-0.6,1.0zM1.9,38.9h0.9v0.7h-0.9zM17.1,27.7h0.8v0.7h-0.8zM20.2,34.7h0.9v0.7h-0.9zM36.3,30.4h0.8v0.6h-0.8zM31.7,7.2h0.8v0.7h-0.8zM37.8,2.9l1.1,0.4l-0.5,0.8z" fill="#406878"/></pattern><pattern id="meshL" width="48" height="48" patternUnits="userSpaceOnUse"><path d="M29.3,34.9l1.6,0.6l-0.7,1.2zM45.9,21.3h1.0v0.8h-1.0zM17.0,36.9h1.2v0.9h-1.2zM1.6,14.4h1.1v0.9h-1.1zM37.5,16.4l1.5,0.6l-0.7,1.1zM19.2,43.3h0.9v0.7h-0.9zM44.0,14.2h1.1v0.9h-1.1zM31.1,3.4l1.2,0.5l-0.5,0.9zM9.4,6.3h0.8v0.7h-0.8zM37.2,31.2h0.8v0.7h-0.8zM10.3,30.3l1.7,0.6l-0.8,1.3zM32.2,23.0h1.0v0.8h-1.0zM2.6,32.8l1.1,0.4l-0.5,0.9zM33.5,30.8h0.8v0.7h-0.8zM10.5,5.5h1.3v1.0h-1.3zM9.8,2.1l1.4,0.6l-0.7,1.1zM41.1,44.7h0.9v0.7h-0.9zM9.4,37.5h1.0v0.8h-1.0zM25.1,4.3h0.9v0.7h-0.9zM1.3,36.4h1.1v0.9h-1.1zM45.5,31.5h1.0v0.8h-1.0zM8.9,27.9h1.1v0.9h-1.1zM0.2,17.9h1.0v0.8h-1.0zM10.4,46.3h0.9v0.7h-0.9zM38.2,4.0h0.9v0.7h-0.9zM36.4,7.1h1.1v0.8h-1.1zM39.3,27.9h1.1v0.9h-1.1zM3.7,20.0h1.1v0.9h-1.1zM14.2,8.5l1.7,0.6l-0.8,1.3zM44.1,25.4h1.1v0.9h-1.1zM11.6,28.9l1.1,0.4l-0.5,0.8zM29.8,43.2h1.0v0.8h-1.0zM35.0,12.0l1.3,0.5l-0.6,1.0zM6.3,9.5l1.5,0.6l-0.7,1.1zM20.9,11.0h0.9v0.7h-0.9zM22.6,14.0h1.2v1.0h-1.2zM16.0,34.4l1.4,0.5l-0.6,1.1zM37.1,0.7h1.1v0.9h-1.1zM40.1,11.2h1.2v1.0h-1.2zM0.2,20.1l1.2,0.5l-0.6,1.0zM12.9,24.7l1.2,0.5l-0.5,0.9zM19.6,31.0l1.5,0.6l-0.7,1.1zM34.4,9.5l1.4,0.5l-0.7,1.1zM36.6,43.6l1.6,0.6l-0.7,1.2zM3.8,29.4h0.9v0.8h-0.9zM32.6,5.6h1.2v1.0h-1.2zM31.3,4.6h1.0v0.8h-1.0zM11.3,28.9l1.0,0.4l-0.5,0.8zM4.2,11.1h1.0v0.8h-1.0zM21.9,25.6l1.1,0.4l-0.5,0.8zM18.6,46.0l1.3,0.5l-0.6,1.0zM8.2,20.3l1.6,0.6l-0.7,1.2zM43.5,33.3l1.5,0.6l-0.7,1.2zM10.7,23.1h1.1v0.8h-1.1zM38.1,22.6h1.0v0.8h-1.0zM6.9,22.9h1.1v0.9h-1.1zM31.4,30.0h1.2v1.0h-1.2zM46.9,29.2l1.4,0.5l-0.6,1.1zM22.3,24.5h0.9v0.7h-0.9zM5.7,19.0h0.8v0.6h-0.8zM34.2,3.4h0.9v0.8h-0.9zM28.5,23.6h1.0v0.8h-1.0zM29.2,27.7h1.2v1.0h-1.2zM5.0,35.5l1.4,0.5l-0.6,1.1zM30.9,22.1h1.1v0.9h-1.1zM19.8,22.1h1.0v0.8h-1.0zM5.8,44.9l1.4,0.5l-0.6,1.1zM24.4,9.9h1.1v0.9h-1.1zM6.6,22.8l1.3,0.5l-0.6,1.0zM10.7,38.5l1.3,0.5l-0.6,1.0zM5.6,33.9l1.7,0.6l-0.8,1.3zM15.9,18.3h0.9v0.7h-0.9zM9.0,42.5h1.2v1.0h-1.2zM20.7,9.2h1.2v1.0h-1.2zM22.6,0.7h0.8v0.6h-0.8zM11.0,8.3h0.9v0.7h-0.9zM18.3,36.2h0.8v0.7h-0.8zM29.1,6.1l1.6,0.6l-0.7,1.2zM12.2,27.2h1.2v1.0h-1.2z" fill="#74b4a0"/><path d="M24.9,39.5l1.5,0.6l-0.7,1.2zM42.3,5.3h1.0v0.8h-1.0zM9.3,41.2l1.4,0.6l-0.7,1.1zM16.7,14.4h1.1v0.9h-1.1zM27.2,0.4l1.1,0.4l-0.5,0.8zM4.3,16.0h1.1v0.9h-1.1zM17.1,15.7h0.9v0.7h-0.9zM5.1,26.6h1.1v0.9h-1.1zM41.2,26.5h1.0v0.8h-1.0zM22.5,33.3h1.0v0.8h-1.0zM44.4,14.5h1.3v1.0h-1.3zM30.5,22.2h1.0v0.8h-1.0zM25.8,23.4h1.0v0.8h-1.0zM46.7,33.2l1.3,0.5l-0.6,1.0zM13.6,44.3h1.1v0.9h-1.1zM9.9,33.0h1.0v0.8h-1.0zM17.0,1.7l1.7,0.6l-0.8,1.3zM18.6,4.6h0.8v0.7h-0.8zM15.2,21.3h0.9v0.7h-0.9zM3.1,46.7h1.0v0.8h-1.0zM14.5,21.1h1.2v1.0h-1.2zM14.7,6.1l1.1,0.4l-0.5,0.8zM26.1,42.1h1.1v0.9h-1.1zM34.2,4.5l1.4,0.5l-0.6,1.1zM9.8,0.1h1.3v1.0h-1.3zM14.3,24.2h1.2v0.9h-1.2zM45.5,0.7h1.3v1.0h-1.3zM39.4,34.7h1.1v0.9h-1.1zM44.7,3.6h1.0v0.8h-1.0zM19.6,20.0h1.1v0.9h-1.1zM13.2,28.5h1.3v1.0h-1.3zM15.0,40.0l1.5,0.6l-0.7,1.1zM27.0,20.7l1.2,0.5l-0.6,1.0zM38.3,9.2h1.0v0.8h-1.0zM12.7,4.5h1.0v0.8h-1.0zM17.9,42.2l1.6,0.6l-0.7,1.2zM22.5,27.3l1.7,0.6l-0.8,1.3zM22.6,33.2h0.8v0.6h-0.8zM14.1,25.9h1.2v1.0h-1.2zM2.8,4.1h1.0v0.8h-1.0zM16.0,38.3l1.4,0.5l-0.6,1.0zM42.4,21.9l1.1,0.4l-0.5,0.9zM14.8,28.8h1.0v0.8h-1.0zM23.6,44.7l1.2,0.5l-0.5,0.9zM23.8,4.9h1.0v0.8h-1.0zM38.6,1.8h1.2v1.0h-1.2zM21.0,29.1l1.6,0.6l-0.7,1.2zM13.3,15.7h1.2v1.0h-1.2zM35.6,34.2h0.8v0.6h-0.8zM0.1,45.7l1.5,0.6l-0.7,1.2zM0.1,20.0l1.3,0.5l-0.6,1.0zM9.4,25.1h1.2v1.0h-1.2zM36.2,9.0h1.1v0.9h-1.1zM4.5,28.5l1.3,0.5l-0.6,1.0zM43.2,28.6h1.1v0.9h-1.1zM38.4,3.3h1.1v0.9h-1.1zM3.4,17.7h1.0v0.8h-1.0zM44.4,4.1h1.0v0.8h-1.0zM44.2,5.1l1.0,0.4l-0.5,0.8zM14.4,15.9l1.4,0.6l-0.7,1.1zM21.4,1.5h0.9v0.7h-0.9zM21.5,5.6h0.8v0.7h-0.8zM13.2,34.3h0.9v0.7h-0.9zM46.6,15.2h1.2v0.9h-1.2zM25.8,11.9l1.7,0.6l-0.8,1.3zM14.1,6.8h1.3v1.0h-1.3zM45.5,30.4h1.1v0.9h-1.1zM19.8,39.3l1.2,0.5l-0.5,0.9zM46.0,29.2h1.2v1.0h-1.2zM39.3,18.0l1.4,0.5l-0.7,1.1zM28.7,45.0h1.1v0.9h-1.1zM17.1,44.0h1.0v0.8h-1.0zM25.2,32.5h0.9v0.7h-0.9zM39.3,45.9l1.5,0.6l-0.7,1.1z" fill="#6ab89e"/><path d="M4.8,11.7h1.2v0.9h-1.2zM16.8,19.0h1.1v0.9h-1.1zM44.9,5.6h0.9v0.7h-0.9zM36.7,17.3l1.2,0.5l-0.6,0.9zM29.6,37.0h0.9v0.7h-0.9zM46.5,45.1l1.4,0.6l-0.7,1.1zM16.0,8.4h1.2v1.0h-1.2zM8.5,9.1h0.8v0.7h-0.8zM0.0,19.1l1.2,0.5l-0.6,0.9zM12.2,46.1h1.0v0.8h-1.0zM33.9,13.4h1.0v0.8h-1.0zM25.6,0.7h1.2v1.0h-1.2zM32.4,44.8h1.1v0.9h-1.1zM32.1,33.8l1.6,0.6l-0.7,1.2zM3.1,39.3h1.1v0.9h-1.1zM34.9,41.3h0.9v0.7h-0.9zM38.0,40.6h1.0v0.8h-1.0zM40.6,23.8l1.3,0.5l-0.6,1.0zM18.1,39.9l1.7,0.6l-0.8,1.3zM43.7,33.2h1.2v1.0h-1.2zM39.1,30.5l1.6,0.6l-0.7,1.2zM22.1,41.8h1.1v0.9h-1.1zM45.8,17.1h1.0v0.8h-1.0zM0.3,2.9h1.2v1.0h-1.2zM4.4,3.3h1.2v1.0h-1.2zM22.1,32.1h1.1v0.9h-1.1zM10.1,0.8h1.1v0.9h-1.1zM41.6,3.4l1.5,0.6l-0.7,1.2zM33.0,12.6h1.2v1.0h-1.2zM15.1,14.4l1.1,0.4l-0.5,0.9zM5.7,45.6l1.6,0.6l-0.7,1.2zM44.6,28.8h0.9v0.7h-0.9zM6.8,35.9h1.0v0.8h-1.0zM14.9,43.0h1.0v0.8h-1.0zM2.3,31.4l1.1,0.4l-0.5,0.9zM28.0,4.9l1.6,0.6l-0.7,1.2zM18.8,6.7h1.2v1.0h-1.2zM24.1,27.6h0.9v0.7h-0.9zM32.6,31.5h1.1v0.9h-1.1zM32.0,34.9l1.1,0.4l-0.5,0.8zM10.3,45.8h1.0v0.8h-1.0zM44.9,28.1h1.2v1.0h-1.2zM2.5,18.5l1.5,0.6l-0.7,1.2zM1.1,36.2l1.3,0.5l-0.6,1.0zM35.1,23.2h1.0v0.8h-1.0zM6.6,0.8h0.8v0.6h-0.8zM13.0,27.4l1.4,0.5l-0.7,1.1zM12.3,39.0h1.1v0.9h-1.1zM37.1,33.0l1.4,0.5l-0.7,1.1zM27.4,2.3h1.3v1.0h-1.3zM14.7,13.8h1.0v0.8h-1.0zM6.6,2.5h1.3v1.0h-1.3zM5.0,21.5h1.0v0.8h-1.0zM18.4,36.3l1.1,0.4l-0.5,0.9zM10.2,18.9l1.3,0.5l-0.6,1.0zM32.1,35.8l1.6,0.6l-0.7,1.2zM26.3,46.0h0.8v0.6h-0.8zM32.0,4.0h1.0v0.8h-1.0zM4.9,15.3h1.2v1.0h-1.2zM24.1,4.4h1.1v0.8h-1.1zM29.1,20.6h1.1v0.9h-1.1zM17.8,9.1h0.9v0.7h-0.9zM0.6,9.2h0.8v0.7h-0.8zM10.1,39.5h1.1v0.9h-1.1zM27.8,33.1h1.2v0.9h-1.2zM44.1,2.9l1.7,0.6l-0.8,1.3zM5.3,2.2h1.2v0.9h-1.2zM8.6,5.6h0.8v0.6h-0.8zM11.3,31.4h1.1v0.9h-1.1zM44.5,2.1h1.2v1.0h-1.2zM5.4,39.2l1.4,0.5l-0.6,1.1zM38.1,0.3h1.0v0.8h-1.0zM45.4,25.8h1.3v1.0h-1.3zM3.0,24.5l1.2,0.4l-0.5,0.9zM7.7,17.1h0.9v0.7h-0.9zM42.7,20.1l1.4,0.5l-0.6,1.1zM5.3,46.9h1.0v0.8h-1.0zM41.6,43.6h0.8v0.7h-0.8zM15.0,32.8l1.2,0.5l-0.5,0.9zM9.2,44.5h1.2v0.9h-1.2zM23.5,30.6l1.4,0.6l-0.7,1.1zM6.3,1.6h1.2v0.9h-1.2zM16.9,32.3h1.1v0.9h-1.1zM6.5,15.4l1.6,0.6l-0.7,1.2zM31.6,24.2h0.8v0.7h-0.8zM1.6,19.4h1.2v1.0h-1.2zM28.6,40.2h1.2v0.9h-1.2zM12.0,36.3l1.2,0.5l-0.6,0.9zM43.7,10.7l1.6,0.6l-0.8,1.3zM28.3,47.0l1.6,0.6l-0.7,1.2zM31.2,23.0l1.7,0.6l-0.8,1.3z" fill="#5aa090"/><path d="M43.1,36.0h0.9v0.7h-0.9zM29.0,6.0h0.8v0.6h-0.8zM33.1,2.7l1.7,0.6l-0.8,1.3zM16.7,24.7h1.2v1.0h-1.2zM19.8,2.6l1.6,0.6l-0.8,1.3zM12.9,22.1h1.3v1.0h-1.3zM17.0,40.1l1.2,0.5l-0.6,0.9zM10.3,32.2l1.5,0.6l-0.7,1.1zM46.0,7.8h1.2v1.0h-1.2zM40.6,41.4l1.6,0.6l-0.7,1.2zM0.1,26.0l1.5,0.6l-0.7,1.1zM3.2,19.0l1.4,0.5l-0.6,1.0zM19.5,7.6h1.1v0.9h-1.1zM22.6,15.2h1.2v1.0h-1.2zM21.7,9.0h1.1v0.9h-1.1zM38.5,35.3h1.1v0.9h-1.1zM1.5,43.5l1.3,0.5l-0.6,1.0zM31.7,22.2l1.7,0.6l-0.8,1.3zM4.1,46.3l1.1,0.4l-0.5,0.9zM36.1,24.5l1.1,0.4l-0.5,0.9zM20.8,38.4l1.5,0.6l-0.7,1.1zM38.0,38.3l1.5,0.6l-0.7,1.1zM28.9,37.5h1.2v1.0h-1.2zM43.4,45.0h1.1v0.9h-1.1zM35.7,33.9l1.2,0.5l-0.6,0.9zM13.7,23.4h1.1v0.9h-1.1zM3.9,38.4h0.9v0.7h-0.9zM26.4,45.0h1.2v1.0h-1.2zM29.8,36.2h1.2v0.9h-1.2zM11.1,43.2h1.3v1.0h-1.3zM23.7,28.7l1.6,0.6l-0.7,1.2zM11.2,32.5h1.2v1.0h-1.2zM14.2,7.8l1.6,0.6l-0.8,1.3zM2.6,10.0l1.4,0.6l-0.7,1.1zM41.0,1.9h1.1v0.9h-1.1zM5.2,3.0h1.1v0.9h-1.1zM3.3,30.2h1.2v1.0h-1.2zM29.6,30.1l1.7,0.6l-0.8,1.3zM43.9,44.5h1.0v0.8h-1.0zM2.5,33.9h0.9v0.7h-0.9zM37.2,36.3h1.2v1.0h-1.2zM19.6,40.6h1.1v0.9h-1.1zM30.6,20.9l1.4,0.5l-0.6,1.1zM8.6,25.6l1.5,0.6l-0.7,1.2zM41.6,22.9l1.3,0.5l-0.6,1.0zM31.7,11.4h0.9v0.8h-0.9zM32.2,21.3h1.2v1.0h-1.2zM9.2,34.2h1.3v1.0h-1.3zM1.9,5.1h1.2v0.9h-1.2zM23.5,27.3l1.4,0.5l-0.6,1.1zM12.0,7.9h0.9v0.7h-0.9zM0.4,27.5h0.9v0.7h-0.9zM26.7,44.4h1.3v1.0h-1.3zM21.0,26.3l1.2,0.4l-0.5,0.9zM16.5,32.7l1.4,0.6l-0.7,1.1zM36.5,30.6l1.4,0.5l-0.6,1.1zM36.2,27.6h0.8v0.6h-0.8zM24.6,12.6h0.9v0.7h-0.9zM13.1,20.5h1.3v1.0h-1.3zM40.1,22.7l1.1,0.4l-0.5,0.8zM41.8,44.0h1.1v0.9h-1.1zM43.8,1.5l1.6,0.6l-0.7,1.2zM4.1,23.4h1.3v1.0h-1.3zM15.5,12.0l1.1,0.4l-0.5,0.8zM26.3,44.3l1.5,0.6l-0.7,1.1zM21.4,33.7l1.2,0.5l-0.6,1.0zM36.9,37.5h0.8v0.7h-0.8zM35.9,18.2h0.9v0.7h-0.9zM31.4,32.7h0.9v0.7h-0.9zM40.9,8.2l1.6,0.6l-0.7,1.2zM27.1,30.0l1.4,0.5l-0.6,1.1zM9.1,43.9l1.6,0.6l-0.7,1.2zM34.1,23.0h1.2v1.0h-1.2zM45.7,42.7h1.3v1.0h-1.3zM41.5,33.3h1.0v0.8h-1.0zM16.0,10.7l1.1,0.4l-0.5,0.9zM12.2,45.7h0.8v0.7h-0.8z" fill="#84d0b0"/><path d="M10.1,46.2h1.2v1.0h-1.2zM32.5,45.4h1.2v1.0h-1.2zM19.5,44.0h0.9v0.7h-0.9zM28.3,0.2h1.1v0.9h-1.1zM43.4,25.6h1.0v0.8h-1.0zM37.5,29.5l1.5,0.6l-0.7,1.2zM1.5,34.8h1.0v0.8h-1.0zM22.8,36.2l1.5,0.6l-0.7,1.1zM5.7,29.2h1.0v0.8h-1.0zM44.0,36.7l1.2,0.5l-0.6,0.9zM14.1,25.1l1.3,0.5l-0.6,1.0zM25.4,2.3l1.5,0.6l-0.7,1.2zM23.0,44.0h1.1v0.9h-1.1zM18.1,41.4h0.9v0.7h-0.9zM2.8,12.0l1.3,0.5l-0.6,1.0zM18.9,25.0l1.1,0.4l-0.5,0.8zM6.5,22.7l1.5,0.6l-0.7,1.2zM37.5,45.5h1.1v0.9h-1.1zM32.9,2.3l1.2,0.4l-0.5,0.9zM41.4,18.5l1.2,0.5l-0.5,0.9zM4.4,18.7l1.5,0.6l-0.7,1.2zM27.9,31.9h1.1v0.8h-1.1zM35.4,31.5l1.7,0.6l-0.8,1.3zM9.7,31.8h1.0v0.8h-1.0zM32.4,26.0h1.2v0.9h-1.2zM21.9,0.3h1.3v1.0h-1.3zM47.0,35.3h0.9v0.7h-0.9zM18.2,43.9h0.8v0.7h-0.8zM17.8,47.0h1.2v0.9h-1.2zM36.7,19.8h1.3v1.0h-1.3zM19.8,12.7h1.0v0.8h-1.0zM13.3,5.0h1.0v0.8h-1.0zM20.7,4.8h0.9v0.7h-0.9zM14.3,21.3h0.9v0.8h-0.9zM26.9,42.9h0.9v0.7h-0.9zM19.7,36.9l1.6,0.6l-0.7,1.2zM5.2,4.5l1.6,0.6l-0.7,1.2zM15.7,36.0l1.1,0.4l-0.5,0.8zM26.0,37.5h1.1v0.9h-1.1zM13.8,17.4l1.5,0.6l-0.7,1.2zM11.1,3.1h1.3v1.0h-1.3zM37.8,36.9h1.2v0.9h-1.2zM32.9,21.9l1.6,0.6l-0.7,1.2zM30.8,14.8h0.8v0.7h-0.8zM15.1,40.3l1.5,0.6l-0.7,1.2zM20.6,41.3h1.0v0.8h-1.0zM20.6,12.8l1.6,0.6l-0.8,1.3zM44.2,18.3h1.2v1.0h-1.2zM35.1,34.2h1.0v0.8h-1.0zM46.2,0.4h1.1v0.9h-1.1zM2.1,10.5h1.3v1.0h-1.3zM46.8,34.8l1.6,0.6l-0.8,1.3zM11.3,45.3h1.2v1.0h-1.2zM27.8,15.1h1.0v0.8h-1.0zM26.3,28.5h1.1v0.9h-1.1zM39.4,40.0h1.1v0.9h-1.1zM12.7,7.6h1.0v0.8h-1.0zM44.3,37.9h1.0v0.8h-1.0zM2.1,23.7h1.1v0.9h-1.1zM26.6,36.9l1.5,0.6l-0.7,1.1zM19.5,10.2h1.0v0.8h-1.0zM7.0,14.8l1.5,0.6l-0.7,1.2zM46.7,4.9h1.1v0.9h-1.1zM14.6,44.5h1.0v0.8h-1.0zM26.4,42.2h1.3v1.0h-1.3zM24.3,40.9h0.9v0.7h-0.9zM14.4,24.4h1.2v0.9h-1.2zM8.0,10.6l1.4,0.5l-0.6,1.1zM1.7,44.7h1.3v1.0h-1.3zM15.6,39.4h1.0v0.8h-1.0zM9.3,18.5l1.7,0.6l-0.8,1.3zM34.4,20.5h1.1v0.9h-1.1zM1.9,5.2h0.9v0.7h-0.9zM18.2,22.3l1.5,0.6l-0.7,1.1zM42.0,6.7h1.3v1.0h-1.3zM32.0,24.6l1.2,0.5l-0.6,0.9zM44.7,2.0h0.8v0.7h-0.8zM17.3,46.9l1.2,0.4l-0.5,0.9z" fill="#98e0c0"/><path d="M7.6,2.3l1.7,0.6l-0.8,1.3zM15.7,9.7l1.7,0.6l-0.8,1.3zM2.8,19.8l1.1,0.4l-0.5,0.9zM8.5,23.1l1.4,0.5l-0.6,1.1zM11.8,31.6l1.3,0.5l-0.6,1.0zM34.3,8.1h1.2v1.0h-1.2zM46.8,9.2l1.4,0.5l-0.7,1.1zM32.4,25.7l1.7,0.6l-0.8,1.3zM4.5,25.6h1.0v0.8h-1.0zM16.5,6.1l1.3,0.5l-0.6,1.0zM17.4,6.7h1.1v0.9h-1.1zM6.4,18.4h1.0v0.8h-1.0zM1.3,16.4h1.1v0.9h-1.1zM31.0,35.0h0.9v0.8h-0.9zM25.9,11.9l1.5,0.6l-0.7,1.2zM33.6,27.0h1.1v0.9h-1.1zM1.6,39.3h1.2v1.0h-1.2zM13.4,3.0h1.2v0.9h-1.2zM9.5,16.8l1.1,0.4l-0.5,0.9zM31.9,28.7h1.1v0.8h-1.1zM33.1,18.8l1.7,0.6l-0.8,1.3zM4.3,5.7h1.0v0.8h-1.0zM4.7,13.8h1.2v1.0h-1.2zM2.9,26.6l1.6,0.6l-0.7,1.2zM7.0,13.9h1.1v0.9h-1.1zM3.6,44.8l1.1,0.4l-0.5,0.9zM7.4,4.4l1.1,0.4l-0.5,0.9zM13.9,15.8h1.2v1.0h-1.2zM44.2,31.1h1.1v0.9h-1.1zM3.0,0.2h1.1v0.9h-1.1zM5.8,21.4h1.1v0.9h-1.1zM25.0,20.8l1.4,0.5l-0.7,1.1zM33.6,14.3l1.4,0.5l-0.6,1.1zM9.2,43.0h0.9v0.7h-0.9zM9.2,20.0h1.2v1.0h-1.2zM25.5,20.6h0.9v0.7h-0.9zM27.8,30.0l1.4,0.5l-0.6,1.0zM40.1,31.1l1.3,0.5l-0.6,1.0zM14.4,34.6h1.0v0.8h-1.0zM24.5,1.2l1.6,0.6l-0.7,1.2zM39.2,28.9h1.2v0.9h-1.2zM17.4,41.6h0.9v0.7h-0.9zM14.3,19.9h1.1v0.9h-1.1zM41.8,14.5h1.0v0.8h-1.0zM20.4,13.9l1.5,0.6l-0.7,1.1zM24.0,40.1h1.2v1.0h-1.2zM1.8,17.2h1.3v1.0h-1.3zM10.9,2.6h1.2v0.9h-1.2zM20.6,14.4h0.9v0.7h-0.9zM39.6,42.9h0.9v0.7h-0.9zM7.7,24.1h1.2v1.0h-1.2zM33.8,29.5l1.3,0.5l-0.6,1.0zM3.5,46.6h0.9v0.7h-0.9zM46.1,15.2l1.6,0.6l-0.8,1.3zM10.3,46.5l1.2,0.4l-0.5,0.9zM6.5,39.1h0.9v0.8h-0.9zM34.4,16.4l1.1,0.4l-0.5,0.9zM41.3,9.1h1.2v1.0h-1.2zM12.1,23.2h0.8v0.7h-0.8zM22.3,42.2l1.6,0.6l-0.7,1.2zM34.5,27.1l1.3,0.5l-0.6,1.0z" fill="#aaeccc"/></pattern><pattern id="meshB" width="40" height="40" patternUnits="userSpaceOnUse"><rect width="40" height="40" fill="#0b2444"/><path d="M18.1,14.6l1.2,0.4l-0.5,0.9zM19.7,36.0l1.6,0.6l-0.7,1.2zM1.6,10.5h1.3v1.0h-1.3zM14.3,26.3l1.6,0.6l-0.7,1.2zM3.7,29.7h1.2v0.9h-1.2zM21.2,20.4h1.2v0.9h-1.2zM26.7,0.8l1.5,0.6l-0.7,1.1zM3.3,13.8h1.4v1.1h-1.4zM34.4,17.1l1.4,0.5l-0.6,1.0zM17.0,38.2h1.1v0.9h-1.1zM14.2,14.6h1.5v1.2h-1.5zM37.2,7.1l1.6,0.6l-0.8,1.3zM18.4,25.5h1.1v0.9h-1.1zM37.3,38.2h1.2v0.9h-1.2zM29.4,32.8h1.0v0.8h-1.0zM29.8,6.6h0.8v0.6h-0.8zM34.4,22.4l1.1,0.4l-0.5,0.9zM37.0,0.3h1.4v1.1h-1.4zM25.2,25.2h0.8v0.6h-0.8zM3.7,8.4l1.1,0.4l-0.5,0.8zM23.1,2.6h1.5v1.2h-1.5zM1.8,12.6l1.1,0.4l-0.5,0.9zM14.1,33.1h0.9v0.7h-0.9zM32.8,16.6l1.4,0.5l-0.7,1.1zM7.9,1.9l1.7,0.6l-0.8,1.3zM14.1,30.4h1.3v1.0h-1.3zM5.7,34.3h1.4v1.1h-1.4zM1.7,9.5h1.5v1.2h-1.5zM18.1,9.1l1.7,0.6l-0.8,1.3zM38.3,26.2l1.1,0.4l-0.5,0.8zM25.5,3.6h1.1v0.9h-1.1zM15.9,11.8h1.2v1.0h-1.2zM19.5,27.5h1.1v0.9h-1.1zM14.6,16.5l1.9,0.7l-0.9,1.4zM18.2,9.2l1.1,0.4l-0.5,0.9zM34.2,6.2h1.3v1.1h-1.3zM6.4,34.1h0.9v0.7h-0.9zM3.5,23.4l1.3,0.5l-0.6,1.0zM35.1,30.9h0.8v0.7h-0.8zM25.5,21.5h1.3v1.1h-1.3zM35.8,1.2l1.9,0.7l-0.9,1.5zM35.1,27.9h1.1v0.9h-1.1zM1.3,15.5l1.3,0.5l-0.6,1.0zM17.2,25.0h1.4v1.1h-1.4zM7.3,19.0l1.7,0.7l-0.8,1.3zM6.9,19.9l1.6,0.6l-0.8,1.3zM28.7,24.9h1.5v1.2h-1.5zM27.8,36.1h1.3v1.0h-1.3zM18.1,2.2h0.9v0.7h-0.9zM35.9,35.2h1.0v0.8h-1.0zM23.5,36.1l1.9,0.7l-0.9,1.5zM9.3,19.5h0.9v0.7h-0.9zM7.3,25.9h0.8v0.7h-0.8zM4.7,29.9h1.0v0.8h-1.0zM26.1,24.0h1.5v1.2h-1.5zM20.2,3.9h1.1v0.9h-1.1zM28.9,23.3h1.2v1.0h-1.2zM18.7,1.4h1.1v0.9h-1.1z" fill="#5aa4e8"/><path d="M13.2,18.1h1.2v1.0h-1.2zM28.3,16.4l1.1,0.4l-0.5,0.9zM29.8,7.7h1.4v1.1h-1.4zM33.8,4.3h1.4v1.1h-1.4zM5.4,11.3h1.3v1.0h-1.3zM11.5,0.6h1.4v1.1h-1.4zM24.8,2.1h1.2v1.0h-1.2zM30.7,35.2l1.9,0.7l-0.9,1.5zM38.3,12.3h0.9v0.7h-0.9zM16.7,38.1h0.9v0.7h-0.9zM17.6,26.5h1.0v0.8h-1.0zM26.5,29.0l1.1,0.4l-0.5,0.8zM21.6,1.9h1.3v1.1h-1.3zM22.9,37.9h1.3v1.0h-1.3zM9.6,18.1h1.3v1.0h-1.3zM14.8,37.5h1.1v0.9h-1.1zM7.7,28.1h1.0v0.8h-1.0zM6.9,24.8l1.9,0.7l-0.9,1.5zM22.3,19.8l1.8,0.7l-0.8,1.4zM28.7,34.5h1.5v1.2h-1.5zM33.4,6.2h1.2v1.0h-1.2zM36.3,3.3h0.9v0.7h-0.9zM21.8,6.4l1.6,0.6l-0.8,1.3zM32.7,11.7h1.4v1.1h-1.4zM14.2,3.1l1.2,0.5l-0.5,0.9zM5.5,6.2l1.1,0.4l-0.5,0.9zM14.3,37.7h1.2v0.9h-1.2zM25.0,32.4h1.2v0.9h-1.2zM7.8,34.2l1.8,0.7l-0.8,1.4zM33.8,16.1h0.8v0.7h-0.8zM7.3,4.7l1.4,0.5l-0.6,1.1zM22.1,14.3h1.4v1.1h-1.4zM13.4,9.2l1.7,0.7l-0.8,1.3zM25.6,15.3l1.9,0.7l-0.9,1.5zM31.2,8.8l1.4,0.5l-0.6,1.1zM1.9,29.4h1.0v0.8h-1.0zM15.3,28.9l1.6,0.6l-0.7,1.2zM3.6,36.7h0.9v0.7h-0.9zM22.9,0.3h1.2v0.9h-1.2zM22.7,5.9h1.3v1.0h-1.3zM19.1,17.5h1.1v0.9h-1.1zM2.4,10.5h1.1v0.9h-1.1zM24.6,15.3l1.6,0.6l-0.7,1.2zM30.5,32.0l1.0,0.4l-0.5,0.8zM26.3,36.9l1.3,0.5l-0.6,1.0zM25.0,3.4h1.5v1.2h-1.5zM18.4,27.1h1.0v0.8h-1.0zM29.9,30.7h1.4v1.1h-1.4zM6.9,4.0h1.0v0.8h-1.0zM36.8,20.2l1.4,0.5l-0.6,1.1zM30.7,18.9l1.8,0.7l-0.8,1.4zM10.7,32.2h1.3v1.0h-1.3zM17.7,7.3h0.9v0.7h-0.9zM10.5,13.2l1.7,0.6l-0.8,1.3zM8.3,19.1h1.0v0.8h-1.0zM8.6,6.7h1.2v1.0h-1.2zM31.4,34.2l1.3,0.5l-0.6,1.0zM21.9,14.8l1.4,0.5l-0.6,1.1zM32.1,0.5l1.5,0.6l-0.7,1.1zM28.6,24.6l1.2,0.5l-0.6,0.9zM15.7,18.7h1.0v0.8h-1.0zM12.2,35.0h1.4v1.1h-1.4zM3.9,25.3l1.1,0.4l-0.5,0.9zM31.7,27.2l1.4,0.5l-0.6,1.1zM16.1,18.2l1.1,0.4l-0.5,0.8zM34.2,21.4h0.9v0.7h-0.9z" fill="#4a8cd0"/><path d="M24.0,1.6l1.4,0.5l-0.6,1.1zM15.5,13.3l1.1,0.4l-0.5,0.8zM14.9,34.6h0.9v0.7h-0.9zM25.1,21.1h1.0v0.8h-1.0zM36.6,38.1h1.1v0.8h-1.1zM21.2,7.4l1.7,0.6l-0.8,1.3zM36.7,26.1h1.1v0.9h-1.1zM3.7,32.1l1.9,0.7l-0.9,1.5zM1.0,7.3l1.7,0.7l-0.8,1.3zM20.5,29.7h0.8v0.6h-0.8zM5.6,22.4l1.2,0.5l-0.6,0.9zM33.1,20.9h1.5v1.2h-1.5zM13.6,21.8h0.9v0.7h-0.9zM22.9,20.8h0.9v0.7h-0.9zM6.9,27.1h1.0v0.8h-1.0zM18.6,34.4h1.0v0.8h-1.0zM27.2,9.9l1.9,0.7l-0.9,1.5zM0.7,27.0l1.6,0.6l-0.7,1.2zM33.1,7.5h1.3v1.1h-1.3zM2.1,0.2h1.3v1.0h-1.3zM7.5,5.6h1.3v1.1h-1.3zM14.1,34.1h1.3v1.0h-1.3zM13.9,21.6l1.7,0.7l-0.8,1.3zM23.2,2.5l1.4,0.5l-0.7,1.1zM37.0,8.2l1.3,0.5l-0.6,1.0zM28.8,30.2l1.9,0.7l-0.9,1.5zM2.0,38.2h0.9v0.7h-0.9zM19.3,36.6h1.4v1.1h-1.4zM30.2,37.4l1.3,0.5l-0.6,1.0zM26.4,17.0l1.6,0.6l-0.7,1.2zM20.7,13.9h1.0v0.8h-1.0zM9.5,14.7l1.8,0.7l-0.9,1.4zM21.3,20.4h1.2v1.0h-1.2zM23.6,30.6h1.2v1.0h-1.2zM24.0,34.4l1.4,0.5l-0.6,1.1zM33.2,4.0h1.4v1.2h-1.4zM18.0,26.6l1.9,0.7l-0.9,1.4zM8.0,33.3h1.3v1.0h-1.3zM39.0,25.0h1.5v1.2h-1.5zM12.4,2.0h1.1v0.9h-1.1zM15.4,22.8h0.9v0.7h-0.9zM34.1,5.1l1.5,0.6l-0.7,1.1zM30.3,37.3l1.8,0.7l-0.8,1.4zM37.5,15.7l1.3,0.5l-0.6,1.0zM15.5,29.7h1.1v0.8h-1.1zM1.1,24.5l1.7,0.7l-0.8,1.3zM28.3,18.5h1.3v1.1h-1.3zM20.8,22.2h1.1v0.8h-1.1zM9.8,5.3h0.9v0.7h-0.9zM37.0,31.9h1.3v1.0h-1.3zM22.3,37.5h1.0v0.8h-1.0zM2.3,6.5l1.4,0.6l-0.7,1.1zM13.4,1.2h1.4v1.1h-1.4zM4.4,21.4l1.8,0.7l-0.8,1.4zM15.6,36.3l1.7,0.6l-0.8,1.3zM30.2,18.1h1.1v0.9h-1.1zM37.2,9.8h1.5v1.2h-1.5zM38.5,20.4h1.2v1.0h-1.2zM38.6,0.3l1.7,0.6l-0.8,1.3z" fill="#1c3a6a"/><path d="M37.1,16.5h0.9v0.7h-0.9zM3.3,21.1h0.8v0.6h-0.8zM10.5,38.8l1.9,0.7l-0.9,1.5zM15.7,38.5h1.2v1.0h-1.2zM12.7,3.5h1.2v1.0h-1.2zM23.3,23.7h1.0v0.8h-1.0zM5.4,3.9h1.1v0.9h-1.1zM16.0,23.0l1.1,0.4l-0.5,0.9zM18.5,27.4l1.1,0.4l-0.5,0.9zM5.0,37.8h0.9v0.7h-0.9zM24.4,7.8h1.4v1.1h-1.4zM15.0,12.8h0.8v0.7h-0.8zM28.0,11.1h1.2v0.9h-1.2zM26.1,38.0l1.2,0.5l-0.6,0.9zM28.9,8.2h0.8v0.7h-0.8zM12.6,19.3h1.0v0.8h-1.0zM1.2,11.4h0.8v0.6h-0.8zM23.0,24.8h1.1v0.9h-1.1zM3.7,21.9l1.3,0.5l-0.6,1.0zM28.6,6.2h0.9v0.7h-0.9zM18.6,10.1h1.1v0.8h-1.1zM10.8,6.4l1.3,0.5l-0.6,1.0zM18.7,33.2l1.7,0.6l-0.8,1.3zM28.0,25.9l1.6,0.6l-0.7,1.2zM29.6,36.7l1.3,0.5l-0.6,1.0zM16.7,12.7h1.3v1.0h-1.3zM3.1,20.1l1.4,0.5l-0.6,1.0zM6.5,4.8h0.9v0.7h-0.9zM5.8,32.8h1.0v0.8h-1.0zM26.4,21.1h1.3v1.0h-1.3zM8.0,20.5h1.0v0.8h-1.0zM27.9,9.6l1.7,0.7l-0.8,1.3zM4.6,14.7l1.2,0.5l-0.5,0.9zM5.7,20.5h1.5v1.2h-1.5zM4.0,13.0l1.5,0.6l-0.7,1.1zM11.6,25.4l1.8,0.7l-0.8,1.4zM35.8,35.9h1.0v0.8h-1.0zM6.7,22.5h1.4v1.1h-1.4zM21.3,1.0h1.0v0.8h-1.0zM9.2,29.5l1.1,0.4l-0.5,0.9zM20.0,28.4l1.1,0.4l-0.5,0.8zM18.4,24.5l1.1,0.4l-0.5,0.9zM9.3,33.6l1.2,0.5l-0.6,0.9zM13.5,8.7l1.7,0.7l-0.8,1.3zM36.5,4.8h1.3v1.1h-1.3zM30.3,30.9h1.0v0.8h-1.0zM30.5,25.9h1.2v1.0h-1.2zM6.0,36.7h1.0v0.8h-1.0zM4.0,10.0h1.1v0.9h-1.1zM33.7,14.5l1.2,0.5l-0.6,1.0zM8.4,12.9l1.9,0.7l-0.9,1.5zM31.4,18.4h1.2v0.9h-1.2zM37.1,27.3h1.3v1.1h-1.3zM1.0,32.7l1.1,0.4l-0.5,0.9zM24.7,23.5h1.1v0.9h-1.1zM2.7,30.9l1.7,0.7l-0.8,1.3zM8.1,35.3l1.5,0.6l-0.7,1.1zM28.5,35.7l1.9,0.7l-0.9,1.4zM32.4,22.0l1.2,0.5l-0.6,1.0zM37.8,25.7l1.6,0.6l-0.7,1.2zM30.5,16.4h1.2v1.0h-1.2zM10.9,7.1h1.0v0.8h-1.0zM17.4,14.2h1.3v1.0h-1.3zM29.8,33.8l1.7,0.6l-0.8,1.3zM7.7,0.4h0.8v0.7h-0.8zM3.8,7.2h1.4v1.1h-1.4z" fill="#3570b0"/><path d="M30.8,34.6l1.9,0.7l-0.9,1.4zM21.0,7.7l1.1,0.4l-0.5,0.8zM23.7,0.0h0.9v0.7h-0.9zM36.6,31.6l1.3,0.5l-0.6,1.0zM23.7,0.5l1.1,0.4l-0.5,0.8zM5.0,31.1l1.8,0.7l-0.8,1.4zM32.5,4.1h1.0v0.8h-1.0zM9.8,33.2l1.6,0.6l-0.7,1.2zM26.6,5.2l1.1,0.4l-0.5,0.8zM31.2,30.3h0.9v0.7h-0.9zM17.7,13.3l1.7,0.7l-0.8,1.3zM28.3,7.4l1.1,0.4l-0.5,0.9zM20.6,12.1l1.8,0.7l-0.8,1.4zM2.9,27.5h1.3v1.0h-1.3zM34.3,32.0h1.3v1.0h-1.3zM12.0,33.5h1.1v0.9h-1.1zM14.7,19.9l1.9,0.7l-0.9,1.5zM13.0,8.6h1.4v1.1h-1.4zM32.0,4.8l1.3,0.5l-0.6,1.0zM21.4,10.4h1.3v1.1h-1.3zM36.3,36.1h1.2v1.0h-1.2zM13.1,24.3h1.3v1.0h-1.3zM23.1,12.1h1.2v1.0h-1.2zM15.0,28.2l1.3,0.5l-0.6,1.0zM0.1,4.4l1.2,0.5l-0.6,0.9zM38.1,1.9h1.0v0.8h-1.0zM39.0,12.9h1.1v0.8h-1.1zM16.7,23.8h1.0v0.8h-1.0zM27.5,25.3h1.3v1.0h-1.3zM34.8,18.0h1.0v0.8h-1.0zM20.8,0.2l1.9,0.7l-0.9,1.5zM1.5,19.3h0.9v0.7h-0.9zM20.9,2.6l1.6,0.6l-0.7,1.2zM36.2,23.5h1.1v0.9h-1.1zM6.8,35.7l1.8,0.7l-0.8,1.4zM27.2,32.5h0.9v0.7h-0.9zM29.6,11.4h1.2v1.0h-1.2zM36.8,21.7h0.9v0.7h-0.9zM20.5,16.6l1.8,0.7l-0.8,1.4zM32.7,32.0h1.4v1.1h-1.4zM12.4,22.0l1.9,0.7l-0.9,1.5zM1.2,35.3l1.8,0.7l-0.8,1.4zM6.1,6.5h1.0v0.8h-1.0zM17.9,6.5l1.4,0.5l-0.7,1.1zM18.1,27.7l1.9,0.7l-0.9,1.5zM12.4,20.8l1.2,0.4l-0.5,0.9zM30.3,9.1h1.0v0.8h-1.0zM18.8,2.3h1.2v1.0h-1.2zM37.1,5.7h1.1v0.9h-1.1zM4.9,9.5l1.2,0.5l-0.6,1.0z" fill="#2a5690"/><path d="M34.3,2.1h1.1v0.9h-1.1zM2.2,14.9h1.2v1.0h-1.2zM27.7,9.7l1.7,0.7l-0.8,1.3zM8.7,0.5h0.9v0.7h-0.9zM7.1,2.5h1.0v0.8h-1.0zM0.3,37.2l1.6,0.6l-0.7,1.2zM10.0,20.2h0.9v0.8h-0.9zM23.8,37.5h1.2v0.9h-1.2zM22.0,34.4h1.4v1.1h-1.4zM13.1,0.7h1.2v0.9h-1.2zM14.0,10.5h1.0v0.8h-1.0zM8.4,7.9h1.3v1.0h-1.3zM2.4,31.5h1.1v0.9h-1.1zM5.1,11.6l1.1,0.4l-0.5,0.8zM1.3,38.0h1.0v0.8h-1.0zM36.9,38.0h1.5v1.2h-1.5zM31.5,2.7h1.1v0.9h-1.1zM27.6,38.0h1.3v1.1h-1.3zM7.6,37.7h1.3v1.0h-1.3zM29.3,23.6h1.1v0.9h-1.1zM7.7,38.9h1.1v0.9h-1.1zM10.8,16.1h1.5v1.2h-1.5zM17.8,1.0h1.5v1.2h-1.5zM36.7,16.2h1.3v1.0h-1.3zM36.1,37.3h1.1v0.8h-1.1zM30.1,3.0h0.8v0.7h-0.8zM26.6,5.1h0.9v0.7h-0.9zM6.1,21.0l1.8,0.7l-0.8,1.4zM4.0,3.6h0.9v0.8h-0.9zM3.5,37.9l1.1,0.4l-0.5,0.8zM29.5,30.2l1.5,0.6l-0.7,1.1zM33.6,21.4l1.4,0.5l-0.6,1.0zM3.6,17.9h1.2v0.9h-1.2zM13.2,16.5h1.4v1.1h-1.4zM28.9,16.4h0.9v0.7h-0.9zM3.4,7.4h1.0v0.8h-1.0zM20.4,29.4h1.1v0.9h-1.1zM3.9,28.9l1.1,0.4l-0.5,0.9zM28.1,35.9l1.2,0.5l-0.5,0.9zM34.9,13.3l1.6,0.6l-0.8,1.3zM14.0,21.7h1.4v1.1h-1.4zM28.6,25.9l1.8,0.7l-0.9,1.4zM32.9,38.8h1.1v0.9h-1.1zM6.4,31.0h1.4v1.1h-1.4zM37.9,4.9h1.2v1.0h-1.2zM36.2,16.2h1.0v0.8h-1.0zM19.2,29.8l1.5,0.6l-0.7,1.2zM38.5,22.8h1.2v1.0h-1.2zM24.6,8.1h1.0v0.8h-1.0zM28.7,27.7h1.4v1.1h-1.4zM1.7,14.3h1.4v1.1h-1.4zM5.6,29.0h1.3v1.0h-1.3zM32.3,4.6h1.4v1.2h-1.4zM32.9,30.2l1.6,0.6l-0.7,1.2z" fill="#22467c"/><path d="M9.2,28.7h1.4v1.1h-1.4zM3.6,22.6l1.2,0.5l-0.6,0.9zM15.7,35.3h0.9v0.7h-0.9zM21.9,5.4h0.9v0.7h-0.9zM4.6,16.4l1.2,0.4l-0.5,0.9zM21.3,3.2l1.5,0.6l-0.7,1.2zM20.9,36.7l1.1,0.4l-0.5,0.8zM17.9,14.5l1.9,0.7l-0.9,1.5zM34.2,1.4h1.2v1.0h-1.2zM3.7,12.4h1.0v0.8h-1.0zM10.8,18.0h1.2v1.0h-1.2zM36.8,3.4h1.5v1.2h-1.5zM28.4,29.8h1.4v1.1h-1.4zM15.2,22.9l1.8,0.7l-0.8,1.4zM36.1,14.9h1.3v1.1h-1.3zM29.2,32.6h1.3v1.0h-1.3zM37.6,20.3l1.3,0.5l-0.6,1.0zM7.5,25.0l1.7,0.7l-0.8,1.3zM0.2,17.2h0.9v0.7h-0.9zM37.8,7.3h1.4v1.1h-1.4zM16.1,19.4h0.9v0.7h-0.9zM11.1,27.4l1.1,0.4l-0.5,0.9zM23.4,31.5l1.4,0.5l-0.6,1.1zM36.9,25.2l1.7,0.6l-0.8,1.3zM36.6,24.4h1.0v0.8h-1.0zM14.4,11.4h0.9v0.8h-0.9zM5.0,27.9l1.7,0.6l-0.8,1.3zM2.9,5.8h0.9v0.7h-0.9zM17.0,38.2h0.9v0.8h-0.9zM18.0,38.8h1.2v1.0h-1.2zM19.7,12.6h1.2v1.0h-1.2zM7.8,4.0h1.2v1.0h-1.2zM28.1,2.0h1.2v0.9h-1.2zM6.7,7.5h0.9v0.7h-0.9zM29.4,6.2l1.6,0.6l-0.8,1.3zM26.3,9.6l1.2,0.5l-0.5,0.9zM23.5,21.8h1.0v0.8h-1.0zM26.3,27.7l1.8,0.7l-0.8,1.4zM8.6,4.2l1.9,0.7l-0.9,1.5zM24.9,34.3h1.4v1.1h-1.4zM11.8,18.2h1.1v0.9h-1.1zM38.5,37.5h1.0v0.8h-1.0zM34.9,25.3h0.9v0.7h-0.9zM28.9,11.8h1.4v1.1h-1.4zM24.6,19.3h1.3v1.1h-1.3zM29.5,15.1l1.3,0.5l-0.6,1.0zM4.7,30.3h1.1v0.9h-1.1zM37.8,30.5l1.5,0.6l-0.7,1.2zM21.3,28.4l1.2,0.5l-0.6,0.9zM6.9,12.8l1.8,0.7l-0.8,1.3zM31.8,13.4l1.6,0.6l-0.7,1.2zM32.3,20.3h1.3v1.0h-1.3zM25.1,18.2h1.3v1.1h-1.3zM32.5,37.5h0.9v0.7h-0.9zM20.6,28.2h1.0v0.8h-1.0zM0.5,1.6h1.4v1.1h-1.4zM31.0,17.1h1.1v0.9h-1.1zM6.9,9.6l1.7,0.6l-0.8,1.3zM32.0,13.7h1.4v1.1h-1.4zM2.9,12.2h1.2v0.9h-1.2zM16.2,18.9l1.1,0.4l-0.5,0.8zM11.1,25.5h0.9v0.7h-0.9zM19.3,38.3l1.2,0.4l-0.5,0.9zM17.5,37.3l1.1,0.4l-0.5,0.8zM28.6,34.1l1.7,0.6l-0.8,1.3zM20.5,24.7h1.2v1.0h-1.2zM17.6,4.6h1.3v1.0h-1.3z" fill="#3f80c4"/></pattern><radialGradient id="sh1" cx="0.5" cy="0.5" r="0.5"><stop offset="0" stop-color="#031426" stop-opacity="0.95"/><stop offset="0.6" stop-color="#031426" stop-opacity="0.6"/><stop offset="1" stop-color="#031426" stop-opacity="0"/></radialGradient></defs><line x1="834.7" y1="380.6" x2="628.2" y2="492.3" stroke="#c21ccc" stroke-width="1.85" stroke-linecap="round"/><line x1="834.7" y1="380.6" x2="1262.7" y2="641.0" stroke="#c21ccc" stroke-width="1.85" stroke-linecap="round"/><line x1="834.7" y1="380.6" x2="838.2" y2="429.2" stroke="#c21ccc" stroke-width="1.85" stroke-linecap="round"/><line x1="838.2" y1="429.2" x2="641.0" y2="540.8" stroke="#c21ccc" stroke-width="1.85" stroke-linecap="round"/><line x1="838.2" y1="429.2" x2="1246.5" y2="688.3" stroke="#c21ccc" stroke-width="1.85" stroke-linecap="round"/><line x1="628.2" y1="492.3" x2="641.0" y2="540.8" stroke="#c21ccc" stroke-width="1.85" stroke-linecap="round"/><line x1="1262.7" y1="641.0" x2="1246.5" y2="688.3" stroke="#c21ccc" stroke-width="1.85" stroke-linecap="round"/><g transform="translate(679.2,553.0) rotate(38.9) scale(1,1.6)" font-family="Liberation Sans, sans-serif" font-size="3.7" fill="#10101e" font-style="italic"><text x="-0.00" y="0.00" textLength="131.5" lengthAdjust="spacingAndGlyphs">Large terrains often contain many small objects with their bounding box.</text><text x="-1.50" y="3.12" textLength="126" lengthAdjust="spacingAndGlyphs">Also the terrain&#39;s bounding box occupies lots of empty space, which is a</text><text x="-3.00" y="6.25" textLength="68" lengthAdjust="spacingAndGlyphs">sign that there&#39;s room for improvement.</text></g><g transform="translate(882.6,719.8) rotate(38.9) scale(1,1.55)" font-family="Liberation Sans, sans-serif" font-size="4.7" fill="#10101e" font-style="italic"><text x="-0.00" y="0.00" textLength="155.5" lengthAdjust="spacingAndGlyphs">By splitting the terrain into multiple BLASes we can reduce how</text><text x="-1.00" y="3.81" textLength="158" lengthAdjust="spacingAndGlyphs">much its bounding box overlaps with other BLAS bounding boxes.</text><text x="-2.00" y="7.61" textLength="132" lengthAdjust="spacingAndGlyphs">We use rectangular partitions to minimize bounding box</text><text x="-3.00" y="11.42" textLength="111" lengthAdjust="spacingAndGlyphs">intersections between segments of the terrain.</text></g><clipPath id="c1"><polygon points="710.3,520.1 718.6,512.7 739.5,507.7 743.7,497.2 745.1,487.3 752.3,479.7 763.2,472.5 766.8,475.2 805.6,461.7 811.9,456.2 826.3,455.3 837.1,455.9 848.0,461.7 858.8,458.9 871.4,457.1 880.4,459.8 887.7,467.1 891.3,473.4 903.9,478.8 925.6,485.1 930.1,492.3 928.3,501.3 938.2,508.6 940.9,521.2 943.6,530.2 938.2,541.0 938.2,546.5 927.4,555.5 936.4,566.3 934.6,573.5 925.6,582.5 920.1,595.2 912.9,606.0 903.9,613.2 894.9,615.9 880.4,615.0 871.4,611.4 858.8,613.2 844.4,615.9 829.9,618.6 810.6,622.4 789.7,620.4 768.7,607.8 745.8,589.0 727.1,574.4 714.4,562.0 712.5,555.7 718.6,547.4 726.0,539.1 712.5,528.4" /></clipPath><polygon points="710.3,520.1 718.6,512.7 739.5,507.7 743.7,497.2 745.1,487.3 752.3,479.7 763.2,472.5 766.8,475.2 805.6,461.7 811.9,456.2 826.3,455.3 837.1,455.9 848.0,461.7 858.8,458.9 871.4,457.1 880.4,459.8 887.7,467.1 891.3,473.4 903.9,478.8 925.6,485.1 930.1,492.3 928.3,501.3 938.2,508.6 940.9,521.2 943.6,530.2 938.2,541.0 938.2,546.5 927.4,555.5 936.4,566.3 934.6,573.5 925.6,582.5 920.1,595.2 912.9,606.0 903.9,613.2 894.9,615.9 880.4,615.0 871.4,611.4 858.8,613.2 844.4,615.9 829.9,618.6 810.6,622.4 789.7,620.4 768.7,607.8 745.8,589.0 727.1,574.4 714.4,562.0 712.5,555.7 718.6,547.4 726.0,539.1 712.5,528.4" fill="url(#mesh)" stroke="#051c31" stroke-width="1" stroke-linejoin="round"/><g clip-path="url(#c1)"><polygon points="710.3,520.1 718.6,512.7 739.5,507.7 743.7,497.2 745.1,487.3 752.3,479.7 763.2,472.5 766.8,475.2 805.6,461.7 811.9,456.2 826.3,455.3 837.1,455.9 848.0,461.7 858.8,458.9 871.4,457.1 880.4,459.8 887.7,467.1 891.3,473.4 903.9,478.8 925.6,485.1 930.1,492.3 928.3,501.3 938.2,508.6 940.9,521.2 943.6,530.2 938.2,541.0 938.2,546.5 927.4,555.5 936.4,566.3 934.6,573.5 925.6,582.5 920.1,595.2 912.9,606.0 903.9,613.2 894.9,615.9 880.4,615.0 871.4,611.4 858.8,613.2 844.4,615.9 829.9,618.6 810.6,622.4 789.7,620.4 768.7,607.8 745.8,589.0 727.1,574.4 714.4,562.0 712.5,555.7 718.6,547.4 726.0,539.1 712.5,528.4" fill="url(#meshL)" opacity="0.3"/><polygon points="709.4,520.3 723.5,512.2 738.8,509.5 754.1,515.8 775.8,524.8 801.0,524.8 826.3,533.8 837.1,548.3 826.3,562.7 801.0,569.9 772.2,573.5 743.3,582.5 714.4,559.1 711.7,553.7 723.5,541.0 710.8,524.8" fill="url(#meshL)" opacity="0.3"/><polygon points="709.4,520.3 723.5,512.2 730.7,517.6 727.1,533.8 736.1,548.3 746.9,566.3 759.5,580.7 743.3,582.5 727.1,569.9 714.4,559.1 711.7,553.7 723.5,541.0 718.0,532.0" fill="url(#meshL)" opacity="0.45"/><polygon points="710.8,555.5 719.8,551.9 736.1,564.5 746.9,577.1 743.3,582.5 727.1,569.9 714.4,559.1" fill="url(#meshL)" opacity="1"/><ellipse cx="858.8" cy="512.2" rx="23.5" ry="46.9" transform="rotate(20 858.8 512.2)" fill="url(#sh1)" opacity="0.9"/><ellipse cx="894.9" cy="548.3" rx="36.1" ry="59.5" transform="rotate(15 894.9 548.3)" fill="url(#sh1)" opacity="0.85"/><ellipse cx="817.3" cy="591.6" rx="59.5" ry="12.6" transform="rotate(-5 817.3 591.6)" fill="url(#sh1)" opacity="0.8"/><ellipse cx="797.4" cy="544.7" rx="10.8" ry="6.3" transform="rotate(-10 797.4 544.7)" fill="url(#sh1)" opacity="1"/><ellipse cx="811.9" cy="465.3" rx="10.8" ry="9.0" transform="rotate(0 811.9 465.3)" fill="url(#sh1)" opacity="0.9"/><ellipse cx="876.8" cy="465.3" rx="12.6" ry="7.2" transform="rotate(0 876.8 465.3)" fill="url(#sh1)" opacity="0.8"/><ellipse cx="925.6" cy="588.0" rx="21.7" ry="28.9" transform="rotate(30 925.6 588.0)" fill="url(#sh1)" opacity="0.7"/></g><polygon points="762.8,463.5 795.3,453.7 798.3,456.7 802.6,455.8 804.7,469.1 800.0,475.0 771.8,484.4 768.4,474.2" fill="#7ad6e2" stroke="#06182a" stroke-width="0.9"/><polygon points="769.1,444.3 770.6,441.2 772.8,444.3 774.5,459.2 770.8,459.8" fill="#06182a"/><polygon points="776.5,459.2 781.2,458.8 782.5,479.3 778.6,480.2" fill="#06182a"/><line x1="762.8" y1="463.5" x2="800.0" y2="475.0" stroke="#06182a" stroke-width="1.7" stroke-linecap="round"/><line x1="768.4" y1="474.2" x2="795.3" y2="453.7" stroke="#06182a" stroke-width="1.7" stroke-linecap="round"/><line x1="771.8" y1="484.4" x2="776.9" y2="468.2" stroke="#06182a" stroke-width="1.7" stroke-linecap="round"/><line x1="782.1" y1="465.6" x2="802.6" y2="462.2" stroke="#06182a" stroke-width="1.7" stroke-linecap="round"/><line x1="782.1" y1="469.9" x2="800.0" y2="475.0" stroke="#06182a" stroke-width="1.7" stroke-linecap="round"/><line x1="790.6" y1="468.2" x2="791.9" y2="477.6" stroke="#06182a" stroke-width="1.7" stroke-linecap="round"/><line x1="796.6" y1="465.6" x2="797.4" y2="475.5" stroke="#06182a" stroke-width="1.7" stroke-linecap="round"/><line x1="765.0" y1="465.6" x2="771.8" y2="484.4" stroke="#06182a" stroke-width="1.7" stroke-linecap="round"/><line x1="766.7" y1="471.6" x2="775.2" y2="464.8" stroke="#06182a" stroke-width="1.7" stroke-linecap="round"/><polygon points="817.1,468.2 819.7,464.8 823.9,467.4 823.9,495.6 818.8,496.8 816.2,493.0" fill="#7ad6e2" stroke="#06182a" stroke-width="0.8"/><line x1="817.1" y1="468.2" x2="823.9" y2="475.9" stroke="#06182a" stroke-width="1.3" stroke-linecap="round"/><line x1="816.2" y1="478.5" x2="823.9" y2="477.6" stroke="#06182a" stroke-width="1.3" stroke-linecap="round"/><line x1="816.7" y1="482.7" x2="823.9" y2="487.9" stroke="#06182a" stroke-width="1.3" stroke-linecap="round"/><line x1="816.7" y1="487.9" x2="823.9" y2="488.7" stroke="#06182a" stroke-width="1.3" stroke-linecap="round"/><line x1="817.1" y1="494.7" x2="823.9" y2="490.4" stroke="#06182a" stroke-width="1.3" stroke-linecap="round"/><line x1="819.7" y1="464.8" x2="821.4" y2="477.6" stroke="#06182a" stroke-width="1.3" stroke-linecap="round"/><clipPath id="c2"><polygon points="899.0,665.7 904.3,657.4 918.5,652.6 931.6,650.3 931.6,624.1 941.1,608.7 958.9,598.0 961.3,595.6 999.3,586.1 1006.4,581.4 1025.4,581.4 1042.0,590.4 1056.3,583.8 1070.5,583.8 1082.4,587.3 1091.9,600.4 1101.4,606.3 1118.0,611.1 1137.0,618.2 1143.0,626.5 1143.0,640.8 1156.0,650.3 1163.2,664.5 1170.3,681.1 1163.2,693.0 1156.0,704.9 1158.4,714.4 1170.3,728.6 1169.1,740.5 1160.8,757.1 1158.4,773.8 1141.8,790.4 1122.8,791.6 1110.9,788.0 1103.8,783.3 1084.8,788.0 1065.8,791.6 1049.1,797.5 1032.5,801.8 1013.5,797.5 999.3,788.0 987.4,773.8 980.3,766.7 968.4,761.9 951.8,750.0 932.8,735.8 916.1,723.9 907.8,714.4 913.8,702.5 923.3,693.0 913.8,683.5 900.7,671.6" /></clipPath><polygon points="899.0,665.7 904.3,657.4 918.5,652.6 931.6,650.3 931.6,624.1 941.1,608.7 958.9,598.0 961.3,595.6 999.3,586.1 1006.4,581.4 1025.4,581.4 1042.0,590.4 1056.3,583.8 1070.5,583.8 1082.4,587.3 1091.9,600.4 1101.4,606.3 1118.0,611.1 1137.0,618.2 1143.0,626.5 1143.0,640.8 1156.0,650.3 1163.2,664.5 1170.3,681.1 1163.2,693.0 1156.0,704.9 1158.4,714.4 1170.3,728.6 1169.1,740.5 1160.8,757.1 1158.4,773.8 1141.8,790.4 1122.8,791.6 1110.9,788.0 1103.8,783.3 1084.8,788.0 1065.8,791.6 1049.1,797.5 1032.5,801.8 1013.5,797.5 999.3,788.0 987.4,773.8 980.3,766.7 968.4,761.9 951.8,750.0 932.8,735.8 916.1,723.9 907.8,714.4 913.8,702.5 923.3,693.0 913.8,683.5 900.7,671.6" fill="url(#mesh)" stroke="#051c31" stroke-width="1" stroke-linejoin="round"/><g clip-path="url(#c2)"><polygon points="899.0,665.7 904.3,657.4 918.5,652.6 931.6,650.3 931.6,624.1 941.1,608.7 958.9,598.0 961.3,595.6 999.3,586.1 1006.4,581.4 1025.4,581.4 1042.0,590.4 1056.3,583.8 1070.5,583.8 1082.4,587.3 1091.9,600.4 1101.4,606.3 1118.0,611.1 1137.0,618.2 1143.0,626.5 1143.0,640.8 1156.0,650.3 1163.2,664.5 1170.3,681.1 1163.2,693.0 1156.0,704.9 1158.4,714.4 1170.3,728.6 1169.1,740.5 1160.8,757.1 1158.4,773.8 1141.8,790.4 1122.8,791.6 1110.9,788.0 1103.8,783.3 1084.8,788.0 1065.8,791.6 1049.1,797.5 1032.5,801.8 1013.5,797.5 999.3,788.0 987.4,773.8 980.3,766.7 968.4,761.9 951.8,750.0 932.8,735.8 916.1,723.9 907.8,714.4 913.8,702.5 923.3,693.0 913.8,683.5 900.7,671.6" fill="url(#meshL)" opacity="0.3"/><polygon points="899.0,665.7 918.5,652.6 931.6,650.3 931.6,624.1 941.1,608.7 961.3,595.6 999.3,586.1 1025.4,581.4 1042.0,590.4 1070.5,583.8 1091.9,600.4 1103.8,631.3 1113.3,678.8 1103.8,726.3 1084.8,754.8 1056.3,773.8 1032.5,801.8 999.3,788.0 980.3,766.7 951.8,750.0 916.1,723.9 907.8,714.4 923.3,693.0 900.7,671.6" fill="url(#meshL)" opacity="0.3"/><polygon points="899.0,665.7 918.5,652.6 937.5,655.0 968.4,662.1 989.8,671.6 961.3,693.0 937.5,712.0 923.3,723.9 907.8,714.4 923.3,693.0 900.7,671.6" fill="url(#meshL)" opacity="0.45"/><polygon points="907.8,714.4 913.8,702.5 920.9,704.9 932.8,716.8 925.6,726.3 916.1,723.9" fill="url(#meshL)" opacity="1"/><polygon points="899.0,665.7 904.3,659.8 916.1,671.6 925.6,688.3 920.9,693.0 913.8,683.5" fill="url(#meshL)" opacity="0.8"/><polygon points="998.1,665.7 1053.9,703.7 1032.5,721.5 982.6,764.3 923.3,723.9 949.4,702.5 982.6,674.0" fill="url(#meshB)" stroke="#0c2442" stroke-width="0.6"/><ellipse cx="1001.6" cy="699.0" rx="6.7" ry="5.2" transform="rotate(0 1001.6 699.0)" fill="url(#sh1)" opacity="1"/><ellipse cx="1127.5" cy="683.5" rx="40.4" ry="78.4" transform="rotate(10 1127.5 683.5)" fill="url(#sh1)" opacity="0.9"/><ellipse cx="1080.0" cy="619.4" rx="28.5" ry="14.3" transform="rotate(-40 1080.0 619.4)" fill="url(#sh1)" opacity="0.9"/><ellipse cx="1103.8" cy="745.3" rx="47.5" ry="35.6" transform="rotate(-20 1103.8 745.3)" fill="url(#sh1)" opacity="0.75"/><ellipse cx="1042.0" cy="769.0" rx="47.5" ry="16.6" transform="rotate(-10 1042.0 769.0)" fill="url(#sh1)" opacity="0.7"/><ellipse cx="1001.6" cy="602.8" rx="11.9" ry="14.3" transform="rotate(0 1001.6 602.8)" fill="url(#sh1)" opacity="0.8"/><ellipse cx="944.6" cy="614.6" rx="11.9" ry="11.9" transform="rotate(0 944.6 614.6)" fill="url(#sh1)" opacity="0.6"/></g><polygon points="958.9,599.2 998.1,588.5 999.7,606.3 975.5,618.2 961.3,620.6" fill="#7ad6e2" stroke="#06182a" stroke-width="0.9"/><polygon points="965.8,579.5 968.9,575.2 971.9,579.5 972.9,593.7 966.0,594.2" fill="#06182a"/><polygon points="974.8,597.5 980.0,596.8 981.0,617.0 976.0,618.4" fill="#06182a"/><line x1="958.9" y1="599.2" x2="975.5" y2="618.2" stroke="#06182a" stroke-width="1.7" stroke-linecap="round"/><line x1="961.3" y1="620.6" x2="975.5" y2="600.4" stroke="#06182a" stroke-width="1.7" stroke-linecap="round"/><line x1="980.3" y1="595.6" x2="998.1" y2="602.8" stroke="#06182a" stroke-width="1.7" stroke-linecap="round"/><line x1="980.3" y1="611.1" x2="998.1" y2="588.5" stroke="#06182a" stroke-width="1.7" stroke-linecap="round"/><line x1="985.0" y1="595.6" x2="987.4" y2="613.4" stroke="#06182a" stroke-width="1.7" stroke-linecap="round"/><line x1="993.3" y1="592.1" x2="994.5" y2="608.7" stroke="#06182a" stroke-width="1.7" stroke-linecap="round"/><line x1="958.9" y1="609.9" x2="999.7" y2="598.0" stroke="#06182a" stroke-width="1.7" stroke-linecap="round"/><polygon points="1017.1,599.2 1025.9,600.4 1025.4,636.0 1017.1,634.8" fill="#7ad6e2" stroke="#06182a" stroke-width="0.8"/><polygon points="1013.0,606.3 1016.8,606.3 1017.8,628.9 1014.0,628.9" fill="#06182a"/><line x1="1017.1" y1="599.2" x2="1025.9" y2="612.3" stroke="#06182a" stroke-width="1.3" stroke-linecap="round"/><line x1="1017.1" y1="614.6" x2="1025.9" y2="613.4" stroke="#06182a" stroke-width="1.3" stroke-linecap="round"/><line x1="1017.1" y1="621.8" x2="1025.9" y2="628.9" stroke="#06182a" stroke-width="1.3" stroke-linecap="round"/><line x1="1017.1" y1="634.8" x2="1025.9" y2="624.1" stroke="#06182a" stroke-width="1.3" stroke-linecap="round"/><line x1="1021.1" y1="599.2" x2="1021.8" y2="636.0" stroke="#06182a" stroke-width="1.3" stroke-linecap="round"/><line x1="628.2" y1="492.3" x2="1058.0" y2="836.0" stroke="#c21ccc" stroke-width="1.85" stroke-linecap="round"/><line x1="1262.7" y1="641.0" x2="1058.0" y2="836.0" stroke="#c21ccc" stroke-width="1.85" stroke-linecap="round"/><line x1="1058.0" y1="836.0" x2="1050.3" y2="883.5" stroke="#c21ccc" stroke-width="1.85" stroke-linecap="round"/><line x1="641.0" y1="540.8" x2="1050.3" y2="883.5" stroke="#c21ccc" stroke-width="1.85" stroke-linecap="round"/><line x1="1246.5" y1="688.3" x2="1050.3" y2="883.5" stroke="#c21ccc" stroke-width="1.85" stroke-linecap="round"/><circle cx="1468.1" cy="177.8" r="7.2" fill="#e0294a" opacity="0.3"/><circle cx="1511.3" cy="177.8" r="7.2" fill="#2e8df0" opacity="0.35"/><circle cx="1489.6" cy="215" r="7.2" fill="#8bc400" opacity="0.35"/><line x1="1489.4" y1="193.4" x2="1489.5" y2="172" stroke="#7fb010" stroke-width="1.3"/><line x1="1489.4" y1="193.4" x2="1468.5" y2="208" stroke="#3a80d0" stroke-width="1.3"/><line x1="1489.4" y1="193.4" x2="1511" y2="208" stroke="#c02848" stroke-width="1.3"/><circle cx="1489.6" cy="171.6" r="7.7" fill="#8bc400"/><circle cx="1468.2" cy="208.6" r="7.7" fill="#2e8df0"/><circle cx="1511.4" cy="208.6" r="7.7" fill="#e0294a"/><g font-family="Liberation Sans, sans-serif" font-size="10" fill="#fff" text-anchor="middle"><text x="1489.6" y="175.4">Y</text><text x="1468.2" y="212.4">Z</text><text x="1511.4" y="212.4">X</text></g></svg>
</div>
<div class="t" id="t62" style="left:309.00px;top:1032px;font-size:11px;">0</div>
<div class="t" id="t63" style="left:1517.00px;top:1032px;font-size:11px;">0</div>
<div class="b" style="left:335px;top:1033px;width:1176px;height:14px;background:#000;"></div>
<div class="b" style="left:337px;top:1035px;width:231px;height:10px;background:#c0c0c0;"></div>
<div class="b" style="left:572px;top:1035px;width:231px;height:10px;background:#808080;"></div>
<div class="b" style="left:807px;top:1035px;width:231px;height:10px;background:#808080;"></div>
<div class="b" style="left:1042px;top:1035px;width:231px;height:10px;background:#808080;"></div>
<div class="b" style="left:1277px;top:1035px;width:231.5px;height:10px;background:#808080;"></div>
<div class="t" id="t64" style="left:1543.00px;top:121px;font-size:16px;font-weight:bold;">Rendering controls</div>
<div class="t" id="t65" style="left:1543.50px;top:154px;font-size:12px;letter-spacing:0.307px;">Rendering mode</div>
<div class="b" style="left:1543px;top:177px;width:16px;height:16px;border-radius:50%;border:4.5px solid #0078d7;background:#fff"></div>
<div class="t" id="t66" style="left:1565.50px;top:175px;font-size:12px;letter-spacing:0.129px;">Geometry</div>
<div class="b" style="left:1543px;top:199px;width:16px;height:16px;border-radius:50%;border:2px solid #000;background:#fff"></div>
<div class="t" id="t67" style="left:1566.50px;top:197px;font-size:12px;letter-spacing:0.319px;">Traversal counter</div>
<div class="b" style="left:1543px;top:231px;width:38px;height:19px;border-radius:9.5px;background:#0078d7"><div class="b" style="left:22.4px;top:3.4px;width:11.8px;height:11.8px;border-radius:50%;background:#fff"></div></div>
<div class="t" id="t68" style="left:1587.50px;top:231px;font-size:12px;letter-spacing:0.417px;">Show geometry</div>
<div class="b" style="left:1543px;top:256px;width:38px;height:19px;border-radius:9.5px;background:#0078d7"><div class="b" style="left:22.4px;top:3.4px;width:11.8px;height:11.8px;border-radius:50%;background:#fff"></div></div>
<div class="t" id="t69" style="left:1587.50px;top:256px;font-size:12px;letter-spacing:0.325px;">Show axis aligned BVH</div>
<div class="b" style="left:1543px;top:281px;width:38px;height:19px;border-radius:9.5px;background:#0078d7"><div class="b" style="left:22.4px;top:3.4px;width:11.8px;height:11.8px;border-radius:50%;background:#fff"></div></div>
<div class="t" id="t70" style="left:1587.50px;top:281px;font-size:12px;letter-spacing:0.396px;">Show instance transforms</div>
<div class="b" style="left:1543px;top:306px;width:38px;height:19px;border-radius:9.5px;background:#0078d7"><div class="b" style="left:22.4px;top:3.4px;width:11.8px;height:11.8px;border-radius:50%;background:#fff"></div></div>
<div class="t" id="t71" style="left:1587.50px;top:306px;font-size:12px;letter-spacing:0.638px;">Show wireframe</div>
<svg class="b" style="left:0;top:0" width="1" height="1"><path d="M1545.55,346.15 L1552.00,353.15 L1558.45,346.15" fill="none" stroke="#9e9e9e" stroke-width="2.7" stroke-linejoin="miter"/></svg>
<div class="t" id="t72" style="left:1565.50px;top:340px;font-size:12px;letter-spacing:0.155px;">No culling</div>
<div class="t" id="t73" style="left:1543.50px;top:386px;font-size:16px;font-weight:bold;letter-spacing:0.014px;">Camera controls</div>
<svg class="b" style="left:0;top:0" width="1" height="1"><path d="M1545.55,428.15 L1552.00,435.15 L1558.45,428.15" fill="none" stroke="#9e9e9e" stroke-width="2.7" stroke-linejoin="miter"/></svg>
<div class="t" id="t74" style="left:1565.50px;top:422px;font-size:12px;letter-spacing:0.182px;">CAD control style</div>
<svg class="b" style="left:0;top:0" width="1" height="1"><path d="M1545.55,456.15 L1552.00,463.15 L1558.45,456.15" fill="none" stroke="#9e9e9e" stroke-width="2.7" stroke-linejoin="miter"/></svg>
<div class="t" id="t75" style="left:1565.50px;top:450px;font-size:12px;letter-spacing:0.253px;">Perspective projection</div>
<svg class="b" style="left:0;top:0" width="1" height="1"><rect x="1819" y="423.8" width="36.8" height="17.1" rx="2.2" fill="#000"/><rect x="1820.60" y="425.35" width="3.45" height="3.60" rx="0.5" fill="#fff"/><rect x="1825.80" y="425.35" width="3.25" height="3.60" rx="0.5" fill="#fff"/><rect x="1830.80" y="425.35" width="3.25" height="3.60" rx="0.5" fill="#fff"/><rect x="1835.80" y="425.35" width="3.30" height="3.60" rx="0.5" fill="#fff"/><rect x="1840.95" y="425.35" width="3.15" height="3.60" rx="0.5" fill="#fff"/><rect x="1845.95" y="425.35" width="3.15" height="3.60" rx="0.5" fill="#fff"/><rect x="1850.95" y="425.35" width="3.15" height="3.60" rx="0.5" fill="#fff"/><rect x="1820.60" y="430.70" width="5.95" height="3.40" rx="0.5" fill="#fff"/><rect x="1828.10" y="430.70" width="3.80" height="3.40" rx="0.5" fill="#fff"/><rect x="1833.10" y="430.70" width="3.80" height="3.40" rx="0.5" fill="#fff"/><rect x="1838.10" y="430.70" width="3.60" height="3.40" rx="0.5" fill="#fff"/><rect x="1843.10" y="430.70" width="3.60" height="3.40" rx="0.5" fill="#fff"/><rect x="1848.00" y="430.70" width="6.10" height="3.40" rx="0.5" fill="#fff"/><rect x="1820.60" y="436.00" width="3.45" height="3.60" rx="0.5" fill="#fff"/><rect x="1825.80" y="436.00" width="23.30" height="3.60" rx="0.5" fill="#fff"/><rect x="1850.65" y="436.00" width="3.45" height="3.60" rx="0.5" fill="#fff"/><rect x="1857.4" y="425" width="8.4" height="13" rx="2.2" fill="#000"/><rect x="1857.4" y="429.3" width="8.4" height="0.8" fill="#9a9a9a"/><rect x="1861.3" y="425.2" width="0.7" height="4" fill="#777"/></svg>
<div class="t" id="t76" style="left:1544.00px;top:483px;font-size:12px;letter-spacing:-0.150px;">Application 'up' axis</div>
<div class="t" id="t77" style="left:1712.50px;top:483px;font-size:12px;">Coordinate system</div>
<div class="b" style="left:1543px;top:507px;width:16px;height:16px;border-radius:50%;border:2px solid #000;background:#fff"></div>
<div class="t" id="t78" style="left:1565.50px;top:505px;font-size:12px;">X</div>
<div class="b" style="left:1543px;top:531px;width:16px;height:16px;border-radius:50%;border:4.5px solid #0078d7;background:#fff"></div>
<div class="t" id="t79" style="left:1566.00px;top:529px;font-size:12px;">Y</div>
<div class="b" style="left:1543px;top:555px;width:16px;height:16px;border-radius:50%;border:2px solid #000;background:#fff"></div>
<div class="t" id="t80" style="left:1566.00px;top:553px;font-size:12px;">Z</div>
<div class="b" style="left:1712px;top:513px;width:38px;height:19px;border-radius:9.5px;background:#fff;border:2px solid #000"><div class="b" style="left:2px;top:1.8px;width:11.4px;height:11.4px;border-radius:50%;background:#000"></div></div>
<div class="t" id="t81" style="left:1756.50px;top:513px;font-size:12px;letter-spacing:0.136px;">Invert vertical</div>
<div class="b" style="left:1712px;top:546px;width:38px;height:19px;border-radius:9.5px;background:#fff;border:2px solid #000"><div class="b" style="left:2px;top:1.8px;width:11.4px;height:11.4px;border-radius:50%;background:#000"></div></div>
<div class="t" id="t82" style="left:1756.50px;top:546px;font-size:12px;letter-spacing:0.287px;">Invert horizontal</div>
<div class="t" id="t83" style="left:1543.50px;top:591px;font-size:12px;letter-spacing:-0.221px;">Camera position</div>
<svg class="b" style="left:0;top:0" width="1" height="1"><path d="M1862.5,601.4 A5.5,5.5 0 1 1 1858.6,595.9" fill="none" stroke="#000" stroke-width="1.35" stroke-linecap="round"/><path d="M1857,592.9 L1859.7,595.8 L1857,598.5" fill="none" stroke="#000" stroke-width="1.35" stroke-linecap="round" stroke-linejoin="round"/></svg>
<div class="b" style="left:1543px;top:619px;width:103px;height:18px;border:1px solid #7a7a7a;background:#fff"><div class="b" style="left:86px;top:1px;width:14px;height:7px;background:#e9e9e9;border:1px solid #c2c2c2"></div><div class="b" style="left:86px;top:8px;width:14px;height:7px;background:#e9e9e9;border:1px solid #c2c2c2"></div><svg class="b" style="left:86px;top:1px" width="14" height="14"><polygon points="3.7,4.7 6.5,2 9.3,4.7" fill="#000"/><polygon points="3.7,9.1 6.5,11.8 9.3,9.1" fill="#000"/></svg></div>
<div class="t" id="t84" style="left:1546.00px;top:620px;font-size:11px;letter-spacing:-0.210px;">120.3362122</div>
<div class="b" style="left:1656px;top:619px;width:103px;height:18px;border:1px solid #7a7a7a;background:#fff"><div class="b" style="left:86px;top:1px;width:14px;height:7px;background:#e9e9e9;border:1px solid #c2c2c2"></div><div class="b" style="left:86px;top:8px;width:14px;height:7px;background:#e9e9e9;border:1px solid #c2c2c2"></div><svg class="b" style="left:86px;top:1px" width="14" height="14"><polygon points="3.7,4.7 6.5,2 9.3,4.7" fill="#000"/><polygon points="3.7,9.1 6.5,11.8 9.3,9.1" fill="#000"/></svg></div>
<div class="t" id="t85" style="left:1659.00px;top:620px;font-size:11px;letter-spacing:-0.210px;">135.6544189</div>
<div class="b" style="left:1769px;top:619px;width:103px;height:18px;border:1px solid #7a7a7a;background:#fff"><div class="b" style="left:86px;top:1px;width:14px;height:7px;background:#e9e9e9;border:1px solid #c2c2c2"></div><div class="b" style="left:86px;top:8px;width:14px;height:7px;background:#e9e9e9;border:1px solid #c2c2c2"></div><svg class="b" style="left:86px;top:1px" width="14" height="14"><polygon points="3.7,4.7 6.5,2 9.3,4.7" fill="#000"/><polygon points="3.7,9.1 6.5,11.8 9.3,9.1" fill="#000"/></svg></div>
<div class="t" id="t86" style="left:1772.50px;top:620px;font-size:11px;letter-spacing:-0.167px;">88.2273712</div>
<div class="t" id="t87" style="left:1543.50px;top:651px;font-size:12px;letter-spacing:0.001px;">Field of view</div>
<div class="t" id="t88" style="left:1858.00px;top:651px;font-size:12px;letter-spacing:0.700px;">45</div>
<div class="b" style="left:1543px;top:683px;width:329px;height:2px;background:#a6a6a6;"></div>
<div class="b" style="left:1624px;top:673px;width:6px;height:22px;background:#0078d7;"></div>
<div class="t" id="t89" style="left:1543.50px;top:719px;font-size:12px;letter-spacing:0.100px;">Movement speed</div>
<div class="t" id="t90" style="left:1857.00px;top:719px;font-size:12px;letter-spacing:1.000px;">28</div>
<div class="b" style="left:1543px;top:751px;width:329px;height:2px;background:#a6a6a6;"></div>
<div class="b" style="left:1674px;top:741px;width:6px;height:22px;background:#0078d7;"></div>
<div class="t" style="left:1903.8px;top:160px;font-size:12px;font-weight:bold;transform:translate(-50%,-50%) rotate(90deg);transform-origin:center;">Hide controls</div>
</body></html>
